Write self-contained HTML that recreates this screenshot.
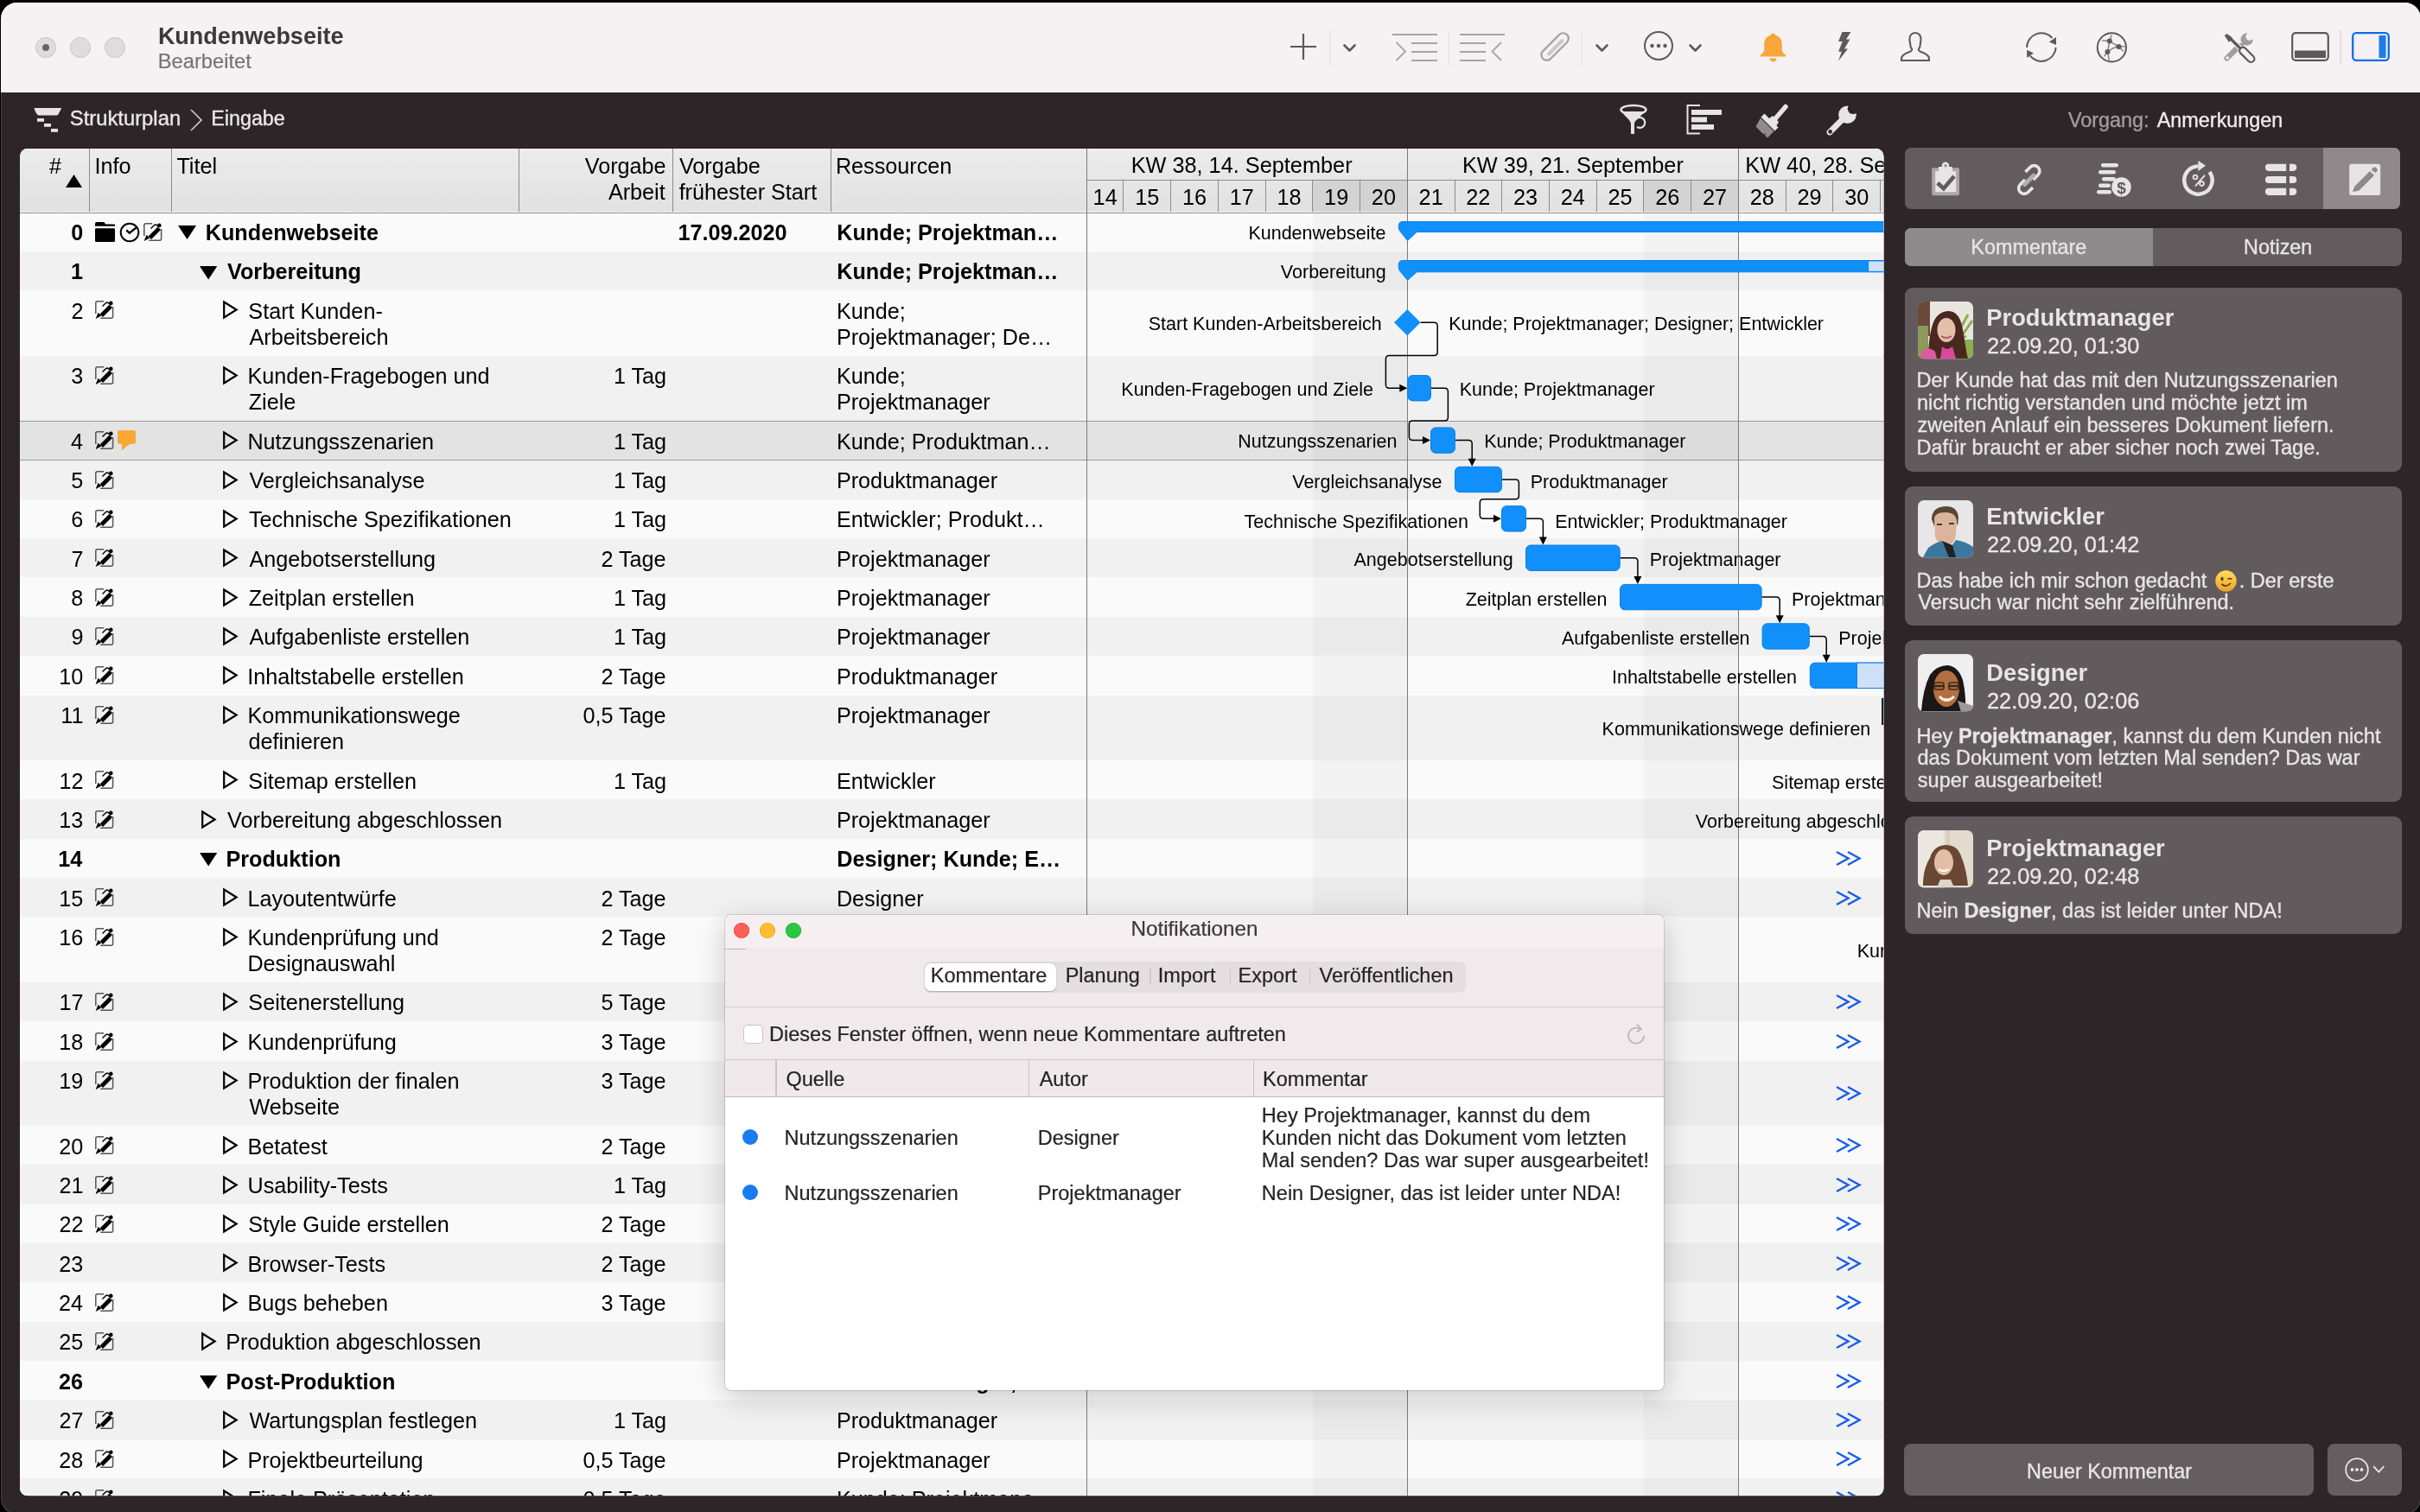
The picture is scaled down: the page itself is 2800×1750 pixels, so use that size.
<!DOCTYPE html>
<html><head><meta charset="utf-8"><title>Kundenwebseite</title>
<style>
html,body{margin:0;padding:0;width:2800px;height:1750px;overflow:hidden;background:#000;}
body{position:relative;font-family:"Liberation Sans", sans-serif;}
.a{position:absolute;}
.t{position:absolute;white-space:nowrap;line-height:1;}
.sf{-webkit-text-stroke:0.35px currentColor;}
.sd{-webkit-text-stroke:0.2px currentColor;}
svg{position:absolute;overflow:visible;}
</style></head><body>
<div id="root" style="position:absolute;left:0;top:0;width:2800px;height:1750px;will-change:transform;"><div class="a" style="left:1px;top:3px;width:2800px;height:1750px;background:#2e2528;border-radius:19px;overflow:hidden;box-shadow:inset 0 0 0 1px #4a4346;"></div><div class="a" style="left:1px;top:3px;width:2800px;height:104px;background:#f6f1f3;border-radius:19px 19px 0 0;box-shadow:inset 0 1px 0 #fff;"></div><div class="a" style="left:41.25px;top:43.25px;width:21.5px;height:21.5px;border-radius:50%;background:#e0dcdd;border:1px solid #c9c5c7;"></div><div class="a" style="left:81.25px;top:43.25px;width:21.5px;height:21.5px;border-radius:50%;background:#e0dcdd;border:1px solid #c9c5c7;"></div><div class="a" style="left:121.25px;top:43.25px;width:21.5px;height:21.5px;border-radius:50%;background:#e0dcdd;border:1px solid #c9c5c7;"></div><div class="a" style="left:49px;top:51px;width:8px;height:8px;border-radius:50%;background:#6a6466;"></div><div class="t " style="left:182.89px;top:29.00px;font-size:27px;color:#3f3739;font-weight:700;">Kundenwebseite</div><div class="t sd" style="left:182.76px;top:60.00px;font-size:23.7px;color:#7b7376;">Bearbeitet</div><svg style="left:1493px;top:39px" width="30" height="30" viewBox="0 0 30 30"><path d="M15 0V30M0 15H30" stroke="#5f585b" stroke-width="2.2"/></svg><div class="a" style="left:1537.50px;top:35.00px;width:1.50px;height:40.00px;background:#e3dde0;"></div><svg style="left:1553.5px;top:51.2px" width="15" height="9" viewBox="0 0 15 9"><path d="M1.5 1.5L7.5 7.5L13.5 1.5" fill="none" stroke="#5f585b" stroke-width="2.6" stroke-linecap="round" stroke-linejoin="round"/></svg><svg style="left:1611px;top:39px" width="53" height="32" viewBox="0 0 53 32"><g stroke="#aaa3a6" stroke-width="1.8" fill="none"><path d="M0 1H52M22 11H52M22 21H52M22 31H52"/><path d="M4.5 10L15 20.5L4.5 31"/></g></svg><div class="a" style="left:1675.50px;top:35.00px;width:1.50px;height:40.00px;background:#e3dde0;"></div><svg style="left:1689px;top:39px" width="53" height="32" viewBox="0 0 53 32"><g stroke="#aaa3a6" stroke-width="1.8" fill="none"><path d="M0 1H52M0 11H30M0 21H30M0 31H30"/><path d="M48 10L37.5 20.5L48 31"/></g></svg><svg style="left:1783px;top:38px" width="34" height="34" viewBox="0 0 34 34"><path d="M9.5 31.5L30 11A6.2 6.2 0 0 0 21.2 2.2L2.2 21.2A6.2 6.2 0 0 0 11 30" fill="none" stroke="#aaa3a6" stroke-width="2.4" stroke-linecap="round"/><path d="M9 24.5L24.5 9" stroke="#cdc8ca" stroke-width="4" stroke-linecap="round"/></svg><div class="a" style="left:1829.50px;top:35.00px;width:1.50px;height:40.00px;background:#e3dde0;"></div><svg style="left:1845.8px;top:51.2px" width="15" height="9" viewBox="0 0 15 9"><path d="M1.5 1.5L7.5 7.5L13.5 1.5" fill="none" stroke="#5f585b" stroke-width="2.6" stroke-linecap="round" stroke-linejoin="round"/></svg><svg style="left:1902px;top:36px" width="34" height="34" viewBox="0 0 34 34"><circle cx="17" cy="17" r="16" fill="none" stroke="#5f585b" stroke-width="2"/><circle cx="9.5" cy="17" r="2.2" fill="#5f585b"/><circle cx="17" cy="17" r="2.2" fill="#5f585b"/><circle cx="24.5" cy="17" r="2.2" fill="#5f585b"/></svg><svg style="left:1953.5px;top:51.2px" width="15" height="9" viewBox="0 0 15 9"><path d="M1.5 1.5L7.5 7.5L13.5 1.5" fill="none" stroke="#5f585b" stroke-width="2.6" stroke-linecap="round" stroke-linejoin="round"/></svg><svg style="left:2035px;top:36px" width="33" height="37" viewBox="0 0 33 37"><path d="M16.5 2.5c1.6 0 2.6 1 2.6 2.2 5.2 1.2 7.7 5.3 7.7 11.3v5.5c0 2.5 2.2 4.6 4.4 6.2v1.8H1.8v-1.8c2.2-1.6 4.4-3.7 4.4-6.2V16c0-6 2.5-10.1 7.7-11.3 0-1.2 1-2.2 2.6-2.2z" fill="#f8a63c"/><path d="M12.5 31.5h8a4 4 0 0 1-8 0z" fill="#f8a63c"/></svg><svg style="left:2126px;top:36px" width="17" height="36" viewBox="0 0 17 36"><path d="M5.4 0.9H15.5L10 9.6H14.4L8 20.6H12L1.1 34.5L4.8 23.8H1.1L5.7 12H1.1Z" fill="#5f585b"/></svg><svg style="left:2199px;top:37px" width="35" height="35" viewBox="0 0 35 35"><path d="M17 1C12.5 1 10.5 4.5 10.5 8.5C10.5 11 11 12.5 11.3 14.5C11 17 12.5 18.5 13.2 20.3C13 22 11 23 8 24C3 26 1 28 1 31V33H33V31C33 28 31 26 26 24C23 23 21 22 20.8 20.3C21.5 18.5 23 17 22.7 14.5C23 12.5 23.5 11 23.5 8.5C23.5 4.5 21.5 1 17 1Z" fill="none" stroke="#5f585b" stroke-width="2.1"/></svg><svg style="left:2343px;top:36px" width="38" height="38" viewBox="0 0 38 38"><g fill="none" stroke="#5f585b" stroke-width="2"><path d="M2.1 18.9A16.8 16.8 0 0 1 31.5 8"/><path d="M35.7 18.9A16.8 16.8 0 0 1 5.9 28.7"/></g><path d="M27.9 12.5L36 7V16Z" fill="#5f585b"/><path d="M2.1 21.8L9.9 25.5L2.1 31Z" fill="#5f585b"/></svg><svg style="left:2426px;top:37px" width="36" height="36" viewBox="0 0 36 36"><g stroke="#8e8789" stroke-width="1.6" fill="none"><path d="M14.8 10.6L17.2 3.4M14.8 10.6L6.2 9.8M14.8 10.6L25.5 17M14.8 10.6L12.5 23.1M25.5 17L32.8 16.7M25.5 17L31 22.5M12.5 23.1Q18 18 25.5 17M12.5 23.1L8.5 28.3M12.5 23.1L14.3 32.9"/></g><circle cx="17.4" cy="17.9" r="16.6" fill="none" stroke="#5f585b" stroke-width="2"/><circle cx="14.8" cy="10.6" r="3" fill="#5f585b"/><circle cx="25.5" cy="17" r="3" fill="#5f585b"/><circle cx="12.5" cy="23.1" r="3" fill="#5f585b"/></svg><svg style="left:2570px;top:36px" width="40" height="38" viewBox="0 0 40 38"><path d="M6.5 31.5L19 19" stroke="#a39c9f" stroke-width="6.2" stroke-linecap="round"/><circle cx="7.2" cy="31" r="1.8" fill="#f6f1f3"/><circle cx="29.7" cy="9.5" r="7.2" fill="#a39c9f"/><path d="M19.5 14L25 19.5L27 14Z" fill="#a39c9f"/><circle cx="33" cy="6.2" r="4.6" fill="#f6f1f3"/><path d="M33 2L38 2L38 10Z" fill="#f6f1f3"/><path d="M9 7L23.5 21.5" stroke="#f6f1f3" stroke-width="6"/><path d="M9 7L23.5 21.5" stroke="#5f585b" stroke-width="3.2"/><path d="M3.8 5.2L6.4 3L12.8 7.6L12.8 8.8L9.5 12.5L8.5 12.3Z" fill="#5f585b"/><rect x="-10.5" y="-4" width="21" height="8" rx="4" transform="translate(29.8 27.4) rotate(45)" fill="#f6f1f3" stroke="#5f585b" stroke-width="2.2"/></svg><svg style="left:2651px;top:37px" width="44" height="34" viewBox="0 0 44 34"><rect x="1.2" y="1.2" width="41.6" height="31.6" rx="4" fill="none" stroke="#5f585b" stroke-width="2.2"/><rect x="4" y="21.5" width="36" height="8.5" fill="#5f585b"/></svg><div class="a" style="left:2707.00px;top:35.00px;width:1.50px;height:40.00px;background:#e3dde0;"></div><svg style="left:2721px;top:37px" width="44" height="34" viewBox="0 0 44 34"><rect x="1.2" y="1.2" width="41.6" height="31.6" rx="4" fill="none" stroke="#0a6ee8" stroke-width="2.3"/><rect x="31.5" y="4" width="8" height="26" fill="#1f7ae8"/></svg><svg style="left:39px;top:125px" width="33" height="28" viewBox="0 0 33 28"><path d="M1 0.5H31.5L29.5 4.5L27.5 8H5L2.5 4.5Z" fill="#e7e5e6" stroke="#e7e5e6" stroke-width="1" stroke-linejoin="round"/><rect x="4" y="12" width="8" height="3.8" fill="#e7e5e6"/><rect x="12" y="18" width="8" height="3.8" fill="#e7e5e6"/><rect x="20" y="24" width="8" height="3.8" fill="#e7e5e6"/></svg><div class="t sf" style="left:80.82px;top:125.00px;font-size:23.8px;color:#ebe8e9;">Strukturplan</div><svg style="left:220px;top:126px" width="14" height="26" viewBox="0 0 14 26"><path d="M1 1L13 13L1 25" fill="none" stroke="#cfcbcd" stroke-width="1.6"/></svg><div class="t sf" style="left:244.29px;top:126.00px;font-size:23.3px;color:#ebe8e9;">Eingabe</div><svg style="left:1874px;top:121px" width="34" height="36" viewBox="0 0 34 36"><ellipse cx="16" cy="6" rx="14.5" ry="5" fill="none" stroke="#e6e4e5" stroke-width="2.4"/><path d="M2 8C6 14 12 17 13 22V34H17V22C18 17 24 14 30 8" fill="#e6e4e5"/><path d="M18 18A6 6 0 1 1 20 26" fill="none" stroke="#e6e4e5" stroke-width="2.2"/></svg><svg style="left:1951px;top:121px" width="41" height="35" viewBox="0 0 41 35"><path d="M16 1H1.5V33.5H16" fill="none" stroke="#e6e4e5" stroke-width="2"/><rect x="6" y="6" width="35" height="6" fill="#e6e4e5"/><rect x="6" y="14.5" width="18" height="6" fill="#e6e4e5"/><rect x="6" y="23" width="26" height="6" fill="#e6e4e5"/></svg><svg style="left:2031px;top:121px" width="39" height="38" viewBox="0 0 39 38"><path d="M35 2.5L22.5 17" stroke="#e6e4e5" stroke-width="5.5" stroke-linecap="round"/><path d="M20 13L27 20L24 25.5L18.5 23L13.5 18Z" fill="#e6e4e5"/><path d="M10.5 10.5L26.5 26.5L22.5 30.5L6.5 14.5Z" fill="#e6e4e5"/><path d="M6 15.5L21.5 31L14 38.5L11 35.5L12.5 33L9.5 34.5L0.5 25.5Z" fill="#8f8b8d"/></svg><svg style="left:2113px;top:120px" width="38" height="38" viewBox="0 0 38 38"><path d="M4 33L21 16" stroke="#e6e4e5" stroke-width="6.8" stroke-linecap="round"/><circle cx="24.5" cy="12.8" r="10.3" fill="#e6e4e5"/><circle cx="31" cy="5.8" r="6.3" fill="#2e2528"/><circle cx="4.6" cy="32.4" r="2.3" fill="#2e2528"/></svg><div class="a" style="left:0;top:0;width:2800px;height:1750px;clip-path:inset(171.8px 620.5px 18.700000000000045px 23px round 9px);"><div class="a" style="left:23.00px;top:171.80px;width:2156.50px;height:1559.50px;background:#fafafa;"></div><div class="a" style="left:23.00px;top:245.35px;width:2156.50px;height:45.37px;background:#fafafa;"></div><div class="a" style="left:23.00px;top:290.72px;width:2156.50px;height:45.37px;background:#f1f1f1;"></div><div class="a" style="left:23.00px;top:336.09px;width:2156.50px;height:75.42px;background:#fafafa;"></div><div class="a" style="left:23.00px;top:411.51px;width:2156.50px;height:75.42px;background:#f1f1f1;"></div><div class="a" style="left:23.00px;top:486.93px;width:2156.50px;height:45.37px;background:#e3e3e3;"></div><div class="a" style="left:23.00px;top:532.30px;width:2156.50px;height:45.37px;background:#f1f1f1;"></div><div class="a" style="left:23.00px;top:577.67px;width:2156.50px;height:45.37px;background:#fafafa;"></div><div class="a" style="left:23.00px;top:623.04px;width:2156.50px;height:45.37px;background:#f1f1f1;"></div><div class="a" style="left:23.00px;top:668.41px;width:2156.50px;height:45.37px;background:#fafafa;"></div><div class="a" style="left:23.00px;top:713.78px;width:2156.50px;height:45.37px;background:#f1f1f1;"></div><div class="a" style="left:23.00px;top:759.15px;width:2156.50px;height:45.37px;background:#fafafa;"></div><div class="a" style="left:23.00px;top:804.52px;width:2156.50px;height:75.42px;background:#f1f1f1;"></div><div class="a" style="left:23.00px;top:879.94px;width:2156.50px;height:45.37px;background:#fafafa;"></div><div class="a" style="left:23.00px;top:925.31px;width:2156.50px;height:45.37px;background:#f1f1f1;"></div><div class="a" style="left:23.00px;top:970.68px;width:2156.50px;height:45.37px;background:#fafafa;"></div><div class="a" style="left:23.00px;top:1016.05px;width:2156.50px;height:45.37px;background:#f1f1f1;"></div><div class="a" style="left:23.00px;top:1061.42px;width:2156.50px;height:75.42px;background:#fafafa;"></div><div class="a" style="left:23.00px;top:1136.84px;width:2156.50px;height:45.37px;background:#f1f1f1;"></div><div class="a" style="left:23.00px;top:1182.21px;width:2156.50px;height:45.37px;background:#fafafa;"></div><div class="a" style="left:23.00px;top:1227.58px;width:2156.50px;height:75.42px;background:#f1f1f1;"></div><div class="a" style="left:23.00px;top:1303.00px;width:2156.50px;height:45.37px;background:#fafafa;"></div><div class="a" style="left:23.00px;top:1348.37px;width:2156.50px;height:45.37px;background:#f1f1f1;"></div><div class="a" style="left:23.00px;top:1393.74px;width:2156.50px;height:45.37px;background:#fafafa;"></div><div class="a" style="left:23.00px;top:1439.11px;width:2156.50px;height:45.37px;background:#f1f1f1;"></div><div class="a" style="left:23.00px;top:1484.48px;width:2156.50px;height:45.37px;background:#fafafa;"></div><div class="a" style="left:23.00px;top:1529.85px;width:2156.50px;height:45.37px;background:#f1f1f1;"></div><div class="a" style="left:23.00px;top:1575.22px;width:2156.50px;height:45.37px;background:#fafafa;"></div><div class="a" style="left:23.00px;top:1620.59px;width:2156.50px;height:45.37px;background:#f1f1f1;"></div><div class="a" style="left:23.00px;top:1665.96px;width:2156.50px;height:45.37px;background:#fafafa;"></div><div class="a" style="left:23.00px;top:1711.33px;width:2156.50px;height:45.37px;background:#f1f1f1;"></div><div class="a" style="left:23.00px;top:486.93px;width:2156.50px;height:1.20px;background:#9c9c9c;"></div><div class="a" style="left:23.00px;top:531.70px;width:2156.50px;height:1.20px;background:#9c9c9c;"></div><div class="a" style="left:1518.84px;top:171.80px;width:109.46px;height:1559.50px;background:rgba(0,0,0,0.028);"></div><div class="a" style="left:1901.95px;top:171.80px;width:109.46px;height:1559.50px;background:rgba(0,0,0,0.028);"></div><div class="a" style="left:23.00px;top:171.80px;width:2156.50px;height:73.55px;background:linear-gradient(#ececec,#e1e1e1);"></div><div class="a" style="left:103.00px;top:171.80px;width:1.00px;height:73.55px;background:#8c8c8c;"></div><div class="a" style="left:198.00px;top:171.80px;width:1.00px;height:73.55px;background:#8c8c8c;"></div><div class="a" style="left:600.00px;top:171.80px;width:1.00px;height:73.55px;background:#8c8c8c;"></div><div class="a" style="left:778.00px;top:171.80px;width:1.00px;height:73.55px;background:#8c8c8c;"></div><div class="a" style="left:961.00px;top:171.80px;width:1.00px;height:73.55px;background:#8c8c8c;"></div><div class="a" style="left:23.00px;top:245.95px;width:2156.50px;height:1.40px;background:#8f8f8f;"></div><div class="a" style="left:1257.40px;top:208.00px;width:922.10px;height:1.00px;background:#8c8c8c;"></div><div class="a" style="left:1518.84px;top:209.00px;width:54.73px;height:36.35px;background:#d3d3d3;"></div><div class="a" style="left:1573.57px;top:209.00px;width:54.73px;height:36.35px;background:#d3d3d3;"></div><div class="a" style="left:1901.95px;top:209.00px;width:54.73px;height:36.35px;background:#d3d3d3;"></div><div class="a" style="left:1956.68px;top:209.00px;width:54.73px;height:36.35px;background:#d3d3d3;"></div><div class="a" style="left:1299.00px;top:209.00px;width:1.00px;height:36.35px;background:#8c8c8c;"></div><div class="a" style="left:1354.00px;top:209.00px;width:1.00px;height:36.35px;background:#8c8c8c;"></div><div class="a" style="left:1409.00px;top:209.00px;width:1.00px;height:36.35px;background:#8c8c8c;"></div><div class="a" style="left:1464.00px;top:209.00px;width:1.00px;height:36.35px;background:#8c8c8c;"></div><div class="a" style="left:1518.00px;top:209.00px;width:1.00px;height:36.35px;background:#8c8c8c;"></div><div class="a" style="left:1573.00px;top:209.00px;width:1.00px;height:36.35px;background:#8c8c8c;"></div><div class="a" style="left:1683.00px;top:209.00px;width:1.00px;height:36.35px;background:#8c8c8c;"></div><div class="a" style="left:1737.00px;top:209.00px;width:1.00px;height:36.35px;background:#8c8c8c;"></div><div class="a" style="left:1792.00px;top:209.00px;width:1.00px;height:36.35px;background:#8c8c8c;"></div><div class="a" style="left:1847.00px;top:209.00px;width:1.00px;height:36.35px;background:#8c8c8c;"></div><div class="a" style="left:1901.00px;top:209.00px;width:1.00px;height:36.35px;background:#8c8c8c;"></div><div class="a" style="left:1956.00px;top:209.00px;width:1.00px;height:36.35px;background:#8c8c8c;"></div><div class="a" style="left:2066.00px;top:209.00px;width:1.00px;height:36.35px;background:#8c8c8c;"></div><div class="a" style="left:2120.00px;top:209.00px;width:1.00px;height:36.35px;background:#8c8c8c;"></div><div class="a" style="left:2175.00px;top:209.00px;width:1.00px;height:36.35px;background:#8c8c8c;"></div><div class="a" style="left:1628.00px;top:171.80px;width:1.00px;height:1559.50px;background:#7c7c7c;"></div><div class="a" style="left:2011.00px;top:171.80px;width:1.00px;height:1559.50px;background:#7c7c7c;"></div><div class="a" style="left:1257.00px;top:171.80px;width:1.00px;height:1559.50px;background:#7c7c7c;"></div><div class="t " style="left:56.89px;top:180.00px;font-size:25.2px;color:#000;">#</div><svg style="left:76px;top:202px" width="19" height="15" viewBox="0 0 19 15"><path d="M9.5 0L19 15H0Z" fill="#000"/></svg><div class="t " style="left:109.57px;top:180.00px;font-size:25.2px;color:#000;">Info</div><div class="t " style="left:204.43px;top:180.00px;font-size:25.2px;color:#000;">Titel</div><div class="t " style="left:-2229.38px;width:3000px;text-align:right;top:180.00px;font-size:25.2px;color:#000;">Vorgabe</div><div class="t " style="left:-2230.32px;width:3000px;text-align:right;top:210.00px;font-size:25.2px;color:#000;">Arbeit</div><div class="t " style="left:785.89px;top:180.00px;font-size:25.2px;color:#000;">Vorgabe</div><div class="t " style="left:785.64px;top:210.00px;font-size:25.2px;color:#000;">frühester Start</div><div class="t " style="left:966.93px;top:180.00px;font-size:25.2px;color:#000;">Ressourcen</div><div class="t " style="left:-63.40px;width:3000px;text-align:center;top:179.00px;font-size:25.3px;color:#000;">KW 38, 14. September</div><div class="t " style="left:319.90px;width:3000px;text-align:center;top:179.00px;font-size:25.3px;color:#000;">KW 39, 21. September</div><div class="t " style="left:2019.32px;top:179.00px;font-size:25.3px;color:#000;">KW 40, 28. September</div><div class="t " style="left:-221.34px;width:3000px;text-align:center;top:216.00px;font-size:25.3px;color:#000;">14</div><div class="t " style="left:-172.71px;width:3000px;text-align:center;top:216.00px;font-size:25.3px;color:#000;">15</div><div class="t " style="left:-117.98px;width:3000px;text-align:center;top:216.00px;font-size:25.3px;color:#000;">16</div><div class="t " style="left:-63.26px;width:3000px;text-align:center;top:216.00px;font-size:25.3px;color:#000;">17</div><div class="t " style="left:-8.53px;width:3000px;text-align:center;top:216.00px;font-size:25.3px;color:#000;">18</div><div class="t " style="left:46.20px;width:3000px;text-align:center;top:216.00px;font-size:25.3px;color:#000;">19</div><div class="t " style="left:100.93px;width:3000px;text-align:center;top:216.00px;font-size:25.3px;color:#000;">20</div><div class="t " style="left:155.66px;width:3000px;text-align:center;top:216.00px;font-size:25.3px;color:#000;">21</div><div class="t " style="left:210.39px;width:3000px;text-align:center;top:216.00px;font-size:25.3px;color:#000;">22</div><div class="t " style="left:265.12px;width:3000px;text-align:center;top:216.00px;font-size:25.3px;color:#000;">23</div><div class="t " style="left:319.86px;width:3000px;text-align:center;top:216.00px;font-size:25.3px;color:#000;">24</div><div class="t " style="left:374.59px;width:3000px;text-align:center;top:216.00px;font-size:25.3px;color:#000;">25</div><div class="t " style="left:429.31px;width:3000px;text-align:center;top:216.00px;font-size:25.3px;color:#000;">26</div><div class="t " style="left:484.04px;width:3000px;text-align:center;top:216.00px;font-size:25.3px;color:#000;">27</div><div class="t " style="left:538.77px;width:3000px;text-align:center;top:216.00px;font-size:25.3px;color:#000;">28</div><div class="t " style="left:593.50px;width:3000px;text-align:center;top:216.00px;font-size:25.3px;color:#000;">29</div><div class="t " style="left:648.23px;width:3000px;text-align:center;top:216.00px;font-size:25.3px;color:#000;">30</div><div class="t " style="left:-2903.77px;width:3000px;text-align:right;top:257.00px;font-size:25.2px;color:#000;font-weight:700;">0</div><svg style="left:110.4px;top:257.25px" width="23" height="23" viewBox="0 0 23 23"><path d="M0 4.8V2Q0 0 2 0H9.5Q11.3 0 12 2.4H21.8Q23 2.4 23 3.6V4.8Z" fill="#000"/><rect x="0" y="7.3" width="23" height="15.6" rx="1.2" fill="#000"/></svg><svg style="left:137.7px;top:256.85px" width="24" height="24" viewBox="0 0 24 24"><circle cx="12" cy="12" r="10.3" fill="none" stroke="#000" stroke-width="2"/><path d="M8.2 9.4L11.8 12.6L19.4 6.6" fill="none" stroke="#000" stroke-width="2.4"/></svg><svg style="left:166.2px;top:257.65px" width="22" height="22" viewBox="0 0 22 22"><path d="M10.2 0.8H2.8Q0.8 0.8 0.8 2.8V15" fill="none" stroke="#555" stroke-width="1.5"/><path d="M6.2 20.2H18.6Q20.6 20.2 20.6 18.2V7" fill="none" stroke="#555" stroke-width="1.5"/><path d="M5.6 15.6L16.6 4.6L20 8L9 19Z" fill="#000"/><path d="M0.6 21L3.6 13.8L7.2 17.6Z" fill="#000"/><path d="M8.5 6.6L12.6 2.6Q14 1.4 15.2 2.6L16.4 3.6" fill="none" stroke="#000" stroke-width="1.4"/><circle cx="18.3" cy="2.9" r="2.3" fill="#000"/></svg><svg style="left:205.8px;top:260.95px" width="21" height="16" viewBox="0 0 21 16"><path d="M0 0H21L10.5 16Z" fill="#000"/></svg><div class="t " style="left:237.81px;top:257.00px;font-size:25.2px;color:#000;font-weight:700;">Kundenwebseite</div><div class="t " style="left:784.41px;top:257.00px;font-size:25.2px;color:#000;font-weight:700;">17.09.2020</div><div class="t " style="left:968.31px;top:257.00px;font-size:25.2px;color:#000;font-weight:700;">Kunde; Projektman…</div><div class="t " style="left:-2904.10px;width:3000px;text-align:right;top:302.00px;font-size:25.2px;color:#000;font-weight:700;">1</div><svg style="left:231.4px;top:307.52px" width="20.3" height="15.4" viewBox="0 0 20.3 15.4"><path d="M0 0H20.3L10.15 15.4Z" fill="#000"/></svg><div class="t " style="left:263.03px;top:302.00px;font-size:25.2px;color:#000;font-weight:700;">Vorbereitung</div><div class="t " style="left:968.31px;top:302.00px;font-size:25.2px;color:#000;font-weight:700;">Kunde; Projektman…</div><div class="t " style="left:-2903.53px;width:3000px;text-align:right;top:348.00px;font-size:25.2px;color:#000;">2</div><svg style="left:110.2px;top:348.39px" width="22" height="22" viewBox="0 0 22 22"><path d="M10.2 0.8H2.8Q0.8 0.8 0.8 2.8V15" fill="none" stroke="#555" stroke-width="1.5"/><path d="M6.2 20.2H18.6Q20.6 20.2 20.6 18.2V7" fill="none" stroke="#555" stroke-width="1.5"/><path d="M5.6 15.6L16.6 4.6L20 8L9 19Z" fill="#000"/><path d="M0.6 21L3.6 13.8L7.2 17.6Z" fill="#000"/><path d="M8.5 6.6L12.6 2.6Q14 1.4 15.2 2.6L16.4 3.6" fill="none" stroke="#000" stroke-width="1.4"/><circle cx="18.3" cy="2.9" r="2.3" fill="#000"/></svg><svg style="left:257.5px;top:348.39px" width="17" height="21" viewBox="0 0 17 21"><path d="M1.2 1.5L15.6 10.5L1.2 19.5Z" fill="none" stroke="#000" stroke-width="2.2" stroke-linejoin="miter"/></svg><div class="t " style="left:287.36px;top:348.00px;font-size:25.2px;color:#000;">Start Kunden-</div><div class="t " style="left:288.45px;top:378.00px;font-size:25.2px;color:#000;">Arbeitsbereich</div><div class="t " style="left:967.93px;top:348.00px;font-size:25.2px;color:#000;">Kunde;</div><div class="t " style="left:967.93px;top:378.00px;font-size:25.2px;color:#000;">Projektmanager; De…</div><div class="t " style="left:-2903.69px;width:3000px;text-align:right;top:423.00px;font-size:25.2px;color:#000;">3</div><svg style="left:110.2px;top:423.81px" width="22" height="22" viewBox="0 0 22 22"><path d="M10.2 0.8H2.8Q0.8 0.8 0.8 2.8V15" fill="none" stroke="#555" stroke-width="1.5"/><path d="M6.2 20.2H18.6Q20.6 20.2 20.6 18.2V7" fill="none" stroke="#555" stroke-width="1.5"/><path d="M5.6 15.6L16.6 4.6L20 8L9 19Z" fill="#000"/><path d="M0.6 21L3.6 13.8L7.2 17.6Z" fill="#000"/><path d="M8.5 6.6L12.6 2.6Q14 1.4 15.2 2.6L16.4 3.6" fill="none" stroke="#000" stroke-width="1.4"/><circle cx="18.3" cy="2.9" r="2.3" fill="#000"/></svg><svg style="left:257.5px;top:423.81px" width="17" height="21" viewBox="0 0 17 21"><path d="M1.2 1.5L15.6 10.5L1.2 19.5Z" fill="none" stroke="#000" stroke-width="2.2" stroke-linejoin="miter"/></svg><div class="t " style="left:286.43px;top:423.00px;font-size:25.2px;color:#000;">Kunden-Fragebogen und</div><div class="t " style="left:287.70px;top:453.00px;font-size:25.2px;color:#000;">Ziele</div><div class="t " style="left:-2228.88px;width:3000px;text-align:right;top:423.00px;font-size:25.2px;color:#000;">1 Tag</div><div class="t " style="left:967.93px;top:423.00px;font-size:25.2px;color:#000;">Kunde;</div><div class="t " style="left:967.93px;top:453.00px;font-size:25.2px;color:#000;">Projektmanager</div><div class="t " style="left:-2904.06px;width:3000px;text-align:right;top:499.00px;font-size:25.2px;color:#000;">4</div><svg style="left:110.2px;top:499.23px" width="22" height="22" viewBox="0 0 22 22"><path d="M10.2 0.8H2.8Q0.8 0.8 0.8 2.8V15" fill="none" stroke="#555" stroke-width="1.5"/><path d="M6.2 20.2H18.6Q20.6 20.2 20.6 18.2V7" fill="none" stroke="#555" stroke-width="1.5"/><path d="M5.6 15.6L16.6 4.6L20 8L9 19Z" fill="#000"/><path d="M0.6 21L3.6 13.8L7.2 17.6Z" fill="#000"/><path d="M8.5 6.6L12.6 2.6Q14 1.4 15.2 2.6L16.4 3.6" fill="none" stroke="#000" stroke-width="1.4"/><circle cx="18.3" cy="2.9" r="2.3" fill="#000"/></svg><svg style="left:136.3px;top:497.93px" width="22" height="24" viewBox="0 0 22 24"><path d="M2.5 0H18.5Q21 0 21 2.5V13.2Q21 15.7 18.5 15.7H14.2L4.9 23.2V15.7H2.5Q0 15.7 0 13.2V2.5Q0 0 2.5 0Z" fill="#f8a735"/></svg><svg style="left:257.5px;top:499.23px" width="17" height="21" viewBox="0 0 17 21"><path d="M1.2 1.5L15.6 10.5L1.2 19.5Z" fill="none" stroke="#000" stroke-width="2.2" stroke-linejoin="miter"/></svg><div class="t " style="left:286.43px;top:499.00px;font-size:25.2px;color:#000;">Nutzungsszenarien</div><div class="t " style="left:-2228.88px;width:3000px;text-align:right;top:499.00px;font-size:25.2px;color:#000;">1 Tag</div><div class="t " style="left:967.93px;top:499.00px;font-size:25.2px;color:#000;">Kunde; Produktman…</div><div class="t " style="left:-2903.74px;width:3000px;text-align:right;top:544.00px;font-size:25.2px;color:#000;">5</div><svg style="left:110.2px;top:544.5999999999999px" width="22" height="22" viewBox="0 0 22 22"><path d="M10.2 0.8H2.8Q0.8 0.8 0.8 2.8V15" fill="none" stroke="#555" stroke-width="1.5"/><path d="M6.2 20.2H18.6Q20.6 20.2 20.6 18.2V7" fill="none" stroke="#555" stroke-width="1.5"/><path d="M5.6 15.6L16.6 4.6L20 8L9 19Z" fill="#000"/><path d="M0.6 21L3.6 13.8L7.2 17.6Z" fill="#000"/><path d="M8.5 6.6L12.6 2.6Q14 1.4 15.2 2.6L16.4 3.6" fill="none" stroke="#000" stroke-width="1.4"/><circle cx="18.3" cy="2.9" r="2.3" fill="#000"/></svg><svg style="left:257.5px;top:544.5999999999999px" width="17" height="21" viewBox="0 0 17 21"><path d="M1.2 1.5L15.6 10.5L1.2 19.5Z" fill="none" stroke="#000" stroke-width="2.2" stroke-linejoin="miter"/></svg><div class="t " style="left:288.39px;top:544.00px;font-size:25.2px;color:#000;">Vergleichsanalyse</div><div class="t " style="left:-2228.88px;width:3000px;text-align:right;top:544.00px;font-size:25.2px;color:#000;">1 Tag</div><div class="t " style="left:967.93px;top:544.00px;font-size:25.2px;color:#000;">Produktmanager</div><div class="t " style="left:-2903.69px;width:3000px;text-align:right;top:589.00px;font-size:25.2px;color:#000;">6</div><svg style="left:110.2px;top:589.9699999999999px" width="22" height="22" viewBox="0 0 22 22"><path d="M10.2 0.8H2.8Q0.8 0.8 0.8 2.8V15" fill="none" stroke="#555" stroke-width="1.5"/><path d="M6.2 20.2H18.6Q20.6 20.2 20.6 18.2V7" fill="none" stroke="#555" stroke-width="1.5"/><path d="M5.6 15.6L16.6 4.6L20 8L9 19Z" fill="#000"/><path d="M0.6 21L3.6 13.8L7.2 17.6Z" fill="#000"/><path d="M8.5 6.6L12.6 2.6Q14 1.4 15.2 2.6L16.4 3.6" fill="none" stroke="#000" stroke-width="1.4"/><circle cx="18.3" cy="2.9" r="2.3" fill="#000"/></svg><svg style="left:257.5px;top:589.9699999999999px" width="17" height="21" viewBox="0 0 17 21"><path d="M1.2 1.5L15.6 10.5L1.2 19.5Z" fill="none" stroke="#000" stroke-width="2.2" stroke-linejoin="miter"/></svg><div class="t " style="left:287.93px;top:589.00px;font-size:25.2px;color:#000;">Technische Spezifikationen</div><div class="t " style="left:-2228.88px;width:3000px;text-align:right;top:589.00px;font-size:25.2px;color:#000;">1 Tag</div><div class="t " style="left:967.93px;top:589.00px;font-size:25.2px;color:#000;">Entwickler; Produkt…</div><div class="t " style="left:-2903.53px;width:3000px;text-align:right;top:635.00px;font-size:25.2px;color:#000;">7</div><svg style="left:110.2px;top:635.3399999999999px" width="22" height="22" viewBox="0 0 22 22"><path d="M10.2 0.8H2.8Q0.8 0.8 0.8 2.8V15" fill="none" stroke="#555" stroke-width="1.5"/><path d="M6.2 20.2H18.6Q20.6 20.2 20.6 18.2V7" fill="none" stroke="#555" stroke-width="1.5"/><path d="M5.6 15.6L16.6 4.6L20 8L9 19Z" fill="#000"/><path d="M0.6 21L3.6 13.8L7.2 17.6Z" fill="#000"/><path d="M8.5 6.6L12.6 2.6Q14 1.4 15.2 2.6L16.4 3.6" fill="none" stroke="#000" stroke-width="1.4"/><circle cx="18.3" cy="2.9" r="2.3" fill="#000"/></svg><svg style="left:257.5px;top:635.3399999999999px" width="17" height="21" viewBox="0 0 17 21"><path d="M1.2 1.5L15.6 10.5L1.2 19.5Z" fill="none" stroke="#000" stroke-width="2.2" stroke-linejoin="miter"/></svg><div class="t " style="left:288.45px;top:635.00px;font-size:25.2px;color:#000;">Angebotserstellung</div><div class="t " style="left:-2229.38px;width:3000px;text-align:right;top:635.00px;font-size:25.2px;color:#000;">2 Tage</div><div class="t " style="left:967.93px;top:635.00px;font-size:25.2px;color:#000;">Projektmanager</div><div class="t " style="left:-2903.70px;width:3000px;text-align:right;top:680.00px;font-size:25.2px;color:#000;">8</div><svg style="left:110.2px;top:680.7099999999999px" width="22" height="22" viewBox="0 0 22 22"><path d="M10.2 0.8H2.8Q0.8 0.8 0.8 2.8V15" fill="none" stroke="#555" stroke-width="1.5"/><path d="M6.2 20.2H18.6Q20.6 20.2 20.6 18.2V7" fill="none" stroke="#555" stroke-width="1.5"/><path d="M5.6 15.6L16.6 4.6L20 8L9 19Z" fill="#000"/><path d="M0.6 21L3.6 13.8L7.2 17.6Z" fill="#000"/><path d="M8.5 6.6L12.6 2.6Q14 1.4 15.2 2.6L16.4 3.6" fill="none" stroke="#000" stroke-width="1.4"/><circle cx="18.3" cy="2.9" r="2.3" fill="#000"/></svg><svg style="left:257.5px;top:680.7099999999999px" width="17" height="21" viewBox="0 0 17 21"><path d="M1.2 1.5L15.6 10.5L1.2 19.5Z" fill="none" stroke="#000" stroke-width="2.2" stroke-linejoin="miter"/></svg><div class="t " style="left:287.70px;top:680.00px;font-size:25.2px;color:#000;">Zeitplan erstellen</div><div class="t " style="left:-2228.88px;width:3000px;text-align:right;top:680.00px;font-size:25.2px;color:#000;">1 Tag</div><div class="t " style="left:967.93px;top:680.00px;font-size:25.2px;color:#000;">Projektmanager</div><div class="t " style="left:-2903.61px;width:3000px;text-align:right;top:725.00px;font-size:25.2px;color:#000;">9</div><svg style="left:110.2px;top:726.0799999999999px" width="22" height="22" viewBox="0 0 22 22"><path d="M10.2 0.8H2.8Q0.8 0.8 0.8 2.8V15" fill="none" stroke="#555" stroke-width="1.5"/><path d="M6.2 20.2H18.6Q20.6 20.2 20.6 18.2V7" fill="none" stroke="#555" stroke-width="1.5"/><path d="M5.6 15.6L16.6 4.6L20 8L9 19Z" fill="#000"/><path d="M0.6 21L3.6 13.8L7.2 17.6Z" fill="#000"/><path d="M8.5 6.6L12.6 2.6Q14 1.4 15.2 2.6L16.4 3.6" fill="none" stroke="#000" stroke-width="1.4"/><circle cx="18.3" cy="2.9" r="2.3" fill="#000"/></svg><svg style="left:257.5px;top:726.0799999999999px" width="17" height="21" viewBox="0 0 17 21"><path d="M1.2 1.5L15.6 10.5L1.2 19.5Z" fill="none" stroke="#000" stroke-width="2.2" stroke-linejoin="miter"/></svg><div class="t " style="left:288.45px;top:725.00px;font-size:25.2px;color:#000;">Aufgabenliste erstellen</div><div class="t " style="left:-2228.88px;width:3000px;text-align:right;top:725.00px;font-size:25.2px;color:#000;">1 Tag</div><div class="t " style="left:967.93px;top:725.00px;font-size:25.2px;color:#000;">Projektmanager</div><div class="t " style="left:-2903.82px;width:3000px;text-align:right;top:771.00px;font-size:25.2px;color:#000;">10</div><svg style="left:110.2px;top:771.4499999999999px" width="22" height="22" viewBox="0 0 22 22"><path d="M10.2 0.8H2.8Q0.8 0.8 0.8 2.8V15" fill="none" stroke="#555" stroke-width="1.5"/><path d="M6.2 20.2H18.6Q20.6 20.2 20.6 18.2V7" fill="none" stroke="#555" stroke-width="1.5"/><path d="M5.6 15.6L16.6 4.6L20 8L9 19Z" fill="#000"/><path d="M0.6 21L3.6 13.8L7.2 17.6Z" fill="#000"/><path d="M8.5 6.6L12.6 2.6Q14 1.4 15.2 2.6L16.4 3.6" fill="none" stroke="#000" stroke-width="1.4"/><circle cx="18.3" cy="2.9" r="2.3" fill="#000"/></svg><svg style="left:257.5px;top:771.4499999999999px" width="17" height="21" viewBox="0 0 17 21"><path d="M1.2 1.5L15.6 10.5L1.2 19.5Z" fill="none" stroke="#000" stroke-width="2.2" stroke-linejoin="miter"/></svg><div class="t " style="left:286.17px;top:771.00px;font-size:25.2px;color:#000;">Inhaltstabelle erstellen</div><div class="t " style="left:-2229.38px;width:3000px;text-align:right;top:771.00px;font-size:25.2px;color:#000;">2 Tage</div><div class="t " style="left:967.93px;top:771.00px;font-size:25.2px;color:#000;">Produktmanager</div><div class="t " style="left:-2903.57px;width:3000px;text-align:right;top:816.00px;font-size:25.2px;color:#000;">11</div><svg style="left:110.2px;top:816.8199999999999px" width="22" height="22" viewBox="0 0 22 22"><path d="M10.2 0.8H2.8Q0.8 0.8 0.8 2.8V15" fill="none" stroke="#555" stroke-width="1.5"/><path d="M6.2 20.2H18.6Q20.6 20.2 20.6 18.2V7" fill="none" stroke="#555" stroke-width="1.5"/><path d="M5.6 15.6L16.6 4.6L20 8L9 19Z" fill="#000"/><path d="M0.6 21L3.6 13.8L7.2 17.6Z" fill="#000"/><path d="M8.5 6.6L12.6 2.6Q14 1.4 15.2 2.6L16.4 3.6" fill="none" stroke="#000" stroke-width="1.4"/><circle cx="18.3" cy="2.9" r="2.3" fill="#000"/></svg><svg style="left:257.5px;top:816.8199999999999px" width="17" height="21" viewBox="0 0 17 21"><path d="M1.2 1.5L15.6 10.5L1.2 19.5Z" fill="none" stroke="#000" stroke-width="2.2" stroke-linejoin="miter"/></svg><div class="t " style="left:286.43px;top:816.00px;font-size:25.2px;color:#000;">Kommunikationswege</div><div class="t " style="left:287.44px;top:846.00px;font-size:25.2px;color:#000;">definieren</div><div class="t " style="left:-2229.38px;width:3000px;text-align:right;top:816.00px;font-size:25.2px;color:#000;">0,5 Tage</div><div class="t " style="left:967.93px;top:816.00px;font-size:25.2px;color:#000;">Projektmanager</div><div class="t " style="left:-2903.53px;width:3000px;text-align:right;top:892.00px;font-size:25.2px;color:#000;">12</div><svg style="left:110.2px;top:892.2399999999999px" width="22" height="22" viewBox="0 0 22 22"><path d="M10.2 0.8H2.8Q0.8 0.8 0.8 2.8V15" fill="none" stroke="#555" stroke-width="1.5"/><path d="M6.2 20.2H18.6Q20.6 20.2 20.6 18.2V7" fill="none" stroke="#555" stroke-width="1.5"/><path d="M5.6 15.6L16.6 4.6L20 8L9 19Z" fill="#000"/><path d="M0.6 21L3.6 13.8L7.2 17.6Z" fill="#000"/><path d="M8.5 6.6L12.6 2.6Q14 1.4 15.2 2.6L16.4 3.6" fill="none" stroke="#000" stroke-width="1.4"/><circle cx="18.3" cy="2.9" r="2.3" fill="#000"/></svg><svg style="left:257.5px;top:892.2399999999999px" width="17" height="21" viewBox="0 0 17 21"><path d="M1.2 1.5L15.6 10.5L1.2 19.5Z" fill="none" stroke="#000" stroke-width="2.2" stroke-linejoin="miter"/></svg><div class="t " style="left:287.36px;top:892.00px;font-size:25.2px;color:#000;">Sitemap erstellen</div><div class="t " style="left:-2228.88px;width:3000px;text-align:right;top:892.00px;font-size:25.2px;color:#000;">1 Tag</div><div class="t " style="left:967.93px;top:892.00px;font-size:25.2px;color:#000;">Entwickler</div><div class="t " style="left:-2903.69px;width:3000px;text-align:right;top:937.00px;font-size:25.2px;color:#000;">13</div><svg style="left:110.2px;top:937.6099999999999px" width="22" height="22" viewBox="0 0 22 22"><path d="M10.2 0.8H2.8Q0.8 0.8 0.8 2.8V15" fill="none" stroke="#555" stroke-width="1.5"/><path d="M6.2 20.2H18.6Q20.6 20.2 20.6 18.2V7" fill="none" stroke="#555" stroke-width="1.5"/><path d="M5.6 15.6L16.6 4.6L20 8L9 19Z" fill="#000"/><path d="M0.6 21L3.6 13.8L7.2 17.6Z" fill="#000"/><path d="M8.5 6.6L12.6 2.6Q14 1.4 15.2 2.6L16.4 3.6" fill="none" stroke="#000" stroke-width="1.4"/><circle cx="18.3" cy="2.9" r="2.3" fill="#000"/></svg><svg style="left:233px;top:937.6099999999999px" width="17" height="21" viewBox="0 0 17 21"><path d="M1.2 1.5L15.6 10.5L1.2 19.5Z" fill="none" stroke="#000" stroke-width="2.2" stroke-linejoin="miter"/></svg><div class="t " style="left:263.09px;top:937.00px;font-size:25.2px;color:#000;">Vorbereitung abgeschlossen</div><div class="t " style="left:967.93px;top:937.00px;font-size:25.2px;color:#000;">Projektmanager</div><div class="t " style="left:-2904.66px;width:3000px;text-align:right;top:982.00px;font-size:25.2px;color:#000;font-weight:700;">14</div><svg style="left:231.4px;top:987.4799999999999px" width="20.3" height="15.4" viewBox="0 0 20.3 15.4"><path d="M0 0H20.3L10.15 15.4Z" fill="#000"/></svg><div class="t " style="left:261.51px;top:982.00px;font-size:25.2px;color:#000;font-weight:700;">Produktion</div><div class="t " style="left:968.31px;top:982.00px;font-size:25.2px;color:#000;font-weight:700;">Designer; Kunde; E…</div><div class="t " style="left:-2903.74px;width:3000px;text-align:right;top:1028.00px;font-size:25.2px;color:#000;">15</div><svg style="left:110.2px;top:1028.35px" width="22" height="22" viewBox="0 0 22 22"><path d="M10.2 0.8H2.8Q0.8 0.8 0.8 2.8V15" fill="none" stroke="#555" stroke-width="1.5"/><path d="M6.2 20.2H18.6Q20.6 20.2 20.6 18.2V7" fill="none" stroke="#555" stroke-width="1.5"/><path d="M5.6 15.6L16.6 4.6L20 8L9 19Z" fill="#000"/><path d="M0.6 21L3.6 13.8L7.2 17.6Z" fill="#000"/><path d="M8.5 6.6L12.6 2.6Q14 1.4 15.2 2.6L16.4 3.6" fill="none" stroke="#000" stroke-width="1.4"/><circle cx="18.3" cy="2.9" r="2.3" fill="#000"/></svg><svg style="left:257.5px;top:1028.35px" width="17" height="21" viewBox="0 0 17 21"><path d="M1.2 1.5L15.6 10.5L1.2 19.5Z" fill="none" stroke="#000" stroke-width="2.2" stroke-linejoin="miter"/></svg><div class="t " style="left:286.43px;top:1028.00px;font-size:25.2px;color:#000;">Layoutentwürfe</div><div class="t " style="left:-2229.38px;width:3000px;text-align:right;top:1028.00px;font-size:25.2px;color:#000;">2 Tage</div><div class="t " style="left:967.93px;top:1028.00px;font-size:25.2px;color:#000;">Designer</div><div class="t " style="left:-2903.69px;width:3000px;text-align:right;top:1073.00px;font-size:25.2px;color:#000;">16</div><svg style="left:110.2px;top:1073.7199999999998px" width="22" height="22" viewBox="0 0 22 22"><path d="M10.2 0.8H2.8Q0.8 0.8 0.8 2.8V15" fill="none" stroke="#555" stroke-width="1.5"/><path d="M6.2 20.2H18.6Q20.6 20.2 20.6 18.2V7" fill="none" stroke="#555" stroke-width="1.5"/><path d="M5.6 15.6L16.6 4.6L20 8L9 19Z" fill="#000"/><path d="M0.6 21L3.6 13.8L7.2 17.6Z" fill="#000"/><path d="M8.5 6.6L12.6 2.6Q14 1.4 15.2 2.6L16.4 3.6" fill="none" stroke="#000" stroke-width="1.4"/><circle cx="18.3" cy="2.9" r="2.3" fill="#000"/></svg><svg style="left:257.5px;top:1073.7199999999998px" width="17" height="21" viewBox="0 0 17 21"><path d="M1.2 1.5L15.6 10.5L1.2 19.5Z" fill="none" stroke="#000" stroke-width="2.2" stroke-linejoin="miter"/></svg><div class="t " style="left:286.43px;top:1073.00px;font-size:25.2px;color:#000;">Kundenprüfung und</div><div class="t " style="left:286.43px;top:1103.00px;font-size:25.2px;color:#000;">Designauswahl</div><div class="t " style="left:-2229.38px;width:3000px;text-align:right;top:1073.00px;font-size:25.2px;color:#000;">2 Tage</div><div class="t " style="left:967.93px;top:1073.00px;font-size:25.2px;color:#000;">Kunde; Designer</div><div class="t " style="left:-2903.53px;width:3000px;text-align:right;top:1148.00px;font-size:25.2px;color:#000;">17</div><svg style="left:110.2px;top:1149.1399999999999px" width="22" height="22" viewBox="0 0 22 22"><path d="M10.2 0.8H2.8Q0.8 0.8 0.8 2.8V15" fill="none" stroke="#555" stroke-width="1.5"/><path d="M6.2 20.2H18.6Q20.6 20.2 20.6 18.2V7" fill="none" stroke="#555" stroke-width="1.5"/><path d="M5.6 15.6L16.6 4.6L20 8L9 19Z" fill="#000"/><path d="M0.6 21L3.6 13.8L7.2 17.6Z" fill="#000"/><path d="M8.5 6.6L12.6 2.6Q14 1.4 15.2 2.6L16.4 3.6" fill="none" stroke="#000" stroke-width="1.4"/><circle cx="18.3" cy="2.9" r="2.3" fill="#000"/></svg><svg style="left:257.5px;top:1149.1399999999999px" width="17" height="21" viewBox="0 0 17 21"><path d="M1.2 1.5L15.6 10.5L1.2 19.5Z" fill="none" stroke="#000" stroke-width="2.2" stroke-linejoin="miter"/></svg><div class="t " style="left:287.36px;top:1148.00px;font-size:25.2px;color:#000;">Seitenerstellung</div><div class="t " style="left:-2229.38px;width:3000px;text-align:right;top:1148.00px;font-size:25.2px;color:#000;">5 Tage</div><div class="t " style="left:967.93px;top:1148.00px;font-size:25.2px;color:#000;">Entwickler</div><div class="t " style="left:-2903.70px;width:3000px;text-align:right;top:1194.00px;font-size:25.2px;color:#000;">18</div><svg style="left:110.2px;top:1194.5099999999998px" width="22" height="22" viewBox="0 0 22 22"><path d="M10.2 0.8H2.8Q0.8 0.8 0.8 2.8V15" fill="none" stroke="#555" stroke-width="1.5"/><path d="M6.2 20.2H18.6Q20.6 20.2 20.6 18.2V7" fill="none" stroke="#555" stroke-width="1.5"/><path d="M5.6 15.6L16.6 4.6L20 8L9 19Z" fill="#000"/><path d="M0.6 21L3.6 13.8L7.2 17.6Z" fill="#000"/><path d="M8.5 6.6L12.6 2.6Q14 1.4 15.2 2.6L16.4 3.6" fill="none" stroke="#000" stroke-width="1.4"/><circle cx="18.3" cy="2.9" r="2.3" fill="#000"/></svg><svg style="left:257.5px;top:1194.5099999999998px" width="17" height="21" viewBox="0 0 17 21"><path d="M1.2 1.5L15.6 10.5L1.2 19.5Z" fill="none" stroke="#000" stroke-width="2.2" stroke-linejoin="miter"/></svg><div class="t " style="left:286.43px;top:1194.00px;font-size:25.2px;color:#000;">Kundenprüfung</div><div class="t " style="left:-2229.38px;width:3000px;text-align:right;top:1194.00px;font-size:25.2px;color:#000;">3 Tage</div><div class="t " style="left:967.93px;top:1194.00px;font-size:25.2px;color:#000;">Kunde</div><div class="t " style="left:-2903.61px;width:3000px;text-align:right;top:1239.00px;font-size:25.2px;color:#000;">19</div><svg style="left:110.2px;top:1239.8799999999997px" width="22" height="22" viewBox="0 0 22 22"><path d="M10.2 0.8H2.8Q0.8 0.8 0.8 2.8V15" fill="none" stroke="#555" stroke-width="1.5"/><path d="M6.2 20.2H18.6Q20.6 20.2 20.6 18.2V7" fill="none" stroke="#555" stroke-width="1.5"/><path d="M5.6 15.6L16.6 4.6L20 8L9 19Z" fill="#000"/><path d="M0.6 21L3.6 13.8L7.2 17.6Z" fill="#000"/><path d="M8.5 6.6L12.6 2.6Q14 1.4 15.2 2.6L16.4 3.6" fill="none" stroke="#000" stroke-width="1.4"/><circle cx="18.3" cy="2.9" r="2.3" fill="#000"/></svg><svg style="left:257.5px;top:1239.8799999999997px" width="17" height="21" viewBox="0 0 17 21"><path d="M1.2 1.5L15.6 10.5L1.2 19.5Z" fill="none" stroke="#000" stroke-width="2.2" stroke-linejoin="miter"/></svg><div class="t " style="left:286.43px;top:1239.00px;font-size:25.2px;color:#000;">Produktion der finalen</div><div class="t " style="left:288.39px;top:1269.00px;font-size:25.2px;color:#000;">Webseite</div><div class="t " style="left:-2229.38px;width:3000px;text-align:right;top:1239.00px;font-size:25.2px;color:#000;">3 Tage</div><div class="t " style="left:967.93px;top:1239.00px;font-size:25.2px;color:#000;">Entwickler</div><div class="t " style="left:-2903.82px;width:3000px;text-align:right;top:1315.00px;font-size:25.2px;color:#000;">20</div><svg style="left:110.2px;top:1315.2999999999997px" width="22" height="22" viewBox="0 0 22 22"><path d="M10.2 0.8H2.8Q0.8 0.8 0.8 2.8V15" fill="none" stroke="#555" stroke-width="1.5"/><path d="M6.2 20.2H18.6Q20.6 20.2 20.6 18.2V7" fill="none" stroke="#555" stroke-width="1.5"/><path d="M5.6 15.6L16.6 4.6L20 8L9 19Z" fill="#000"/><path d="M0.6 21L3.6 13.8L7.2 17.6Z" fill="#000"/><path d="M8.5 6.6L12.6 2.6Q14 1.4 15.2 2.6L16.4 3.6" fill="none" stroke="#000" stroke-width="1.4"/><circle cx="18.3" cy="2.9" r="2.3" fill="#000"/></svg><svg style="left:257.5px;top:1315.2999999999997px" width="17" height="21" viewBox="0 0 17 21"><path d="M1.2 1.5L15.6 10.5L1.2 19.5Z" fill="none" stroke="#000" stroke-width="2.2" stroke-linejoin="miter"/></svg><div class="t " style="left:286.43px;top:1315.00px;font-size:25.2px;color:#000;">Betatest</div><div class="t " style="left:-2229.38px;width:3000px;text-align:right;top:1315.00px;font-size:25.2px;color:#000;">2 Tage</div><div class="t " style="left:967.93px;top:1315.00px;font-size:25.2px;color:#000;">Kunde</div><div class="t " style="left:-2903.57px;width:3000px;text-align:right;top:1360.00px;font-size:25.2px;color:#000;">21</div><svg style="left:110.2px;top:1360.6699999999996px" width="22" height="22" viewBox="0 0 22 22"><path d="M10.2 0.8H2.8Q0.8 0.8 0.8 2.8V15" fill="none" stroke="#555" stroke-width="1.5"/><path d="M6.2 20.2H18.6Q20.6 20.2 20.6 18.2V7" fill="none" stroke="#555" stroke-width="1.5"/><path d="M5.6 15.6L16.6 4.6L20 8L9 19Z" fill="#000"/><path d="M0.6 21L3.6 13.8L7.2 17.6Z" fill="#000"/><path d="M8.5 6.6L12.6 2.6Q14 1.4 15.2 2.6L16.4 3.6" fill="none" stroke="#000" stroke-width="1.4"/><circle cx="18.3" cy="2.9" r="2.3" fill="#000"/></svg><svg style="left:257.5px;top:1360.6699999999996px" width="17" height="21" viewBox="0 0 17 21"><path d="M1.2 1.5L15.6 10.5L1.2 19.5Z" fill="none" stroke="#000" stroke-width="2.2" stroke-linejoin="miter"/></svg><div class="t " style="left:286.56px;top:1360.00px;font-size:25.2px;color:#000;">Usability-Tests</div><div class="t " style="left:-2228.88px;width:3000px;text-align:right;top:1360.00px;font-size:25.2px;color:#000;">1 Tag</div><div class="t " style="left:967.93px;top:1360.00px;font-size:25.2px;color:#000;">Kunde</div><div class="t " style="left:-2903.53px;width:3000px;text-align:right;top:1405.00px;font-size:25.2px;color:#000;">22</div><svg style="left:110.2px;top:1406.0399999999995px" width="22" height="22" viewBox="0 0 22 22"><path d="M10.2 0.8H2.8Q0.8 0.8 0.8 2.8V15" fill="none" stroke="#555" stroke-width="1.5"/><path d="M6.2 20.2H18.6Q20.6 20.2 20.6 18.2V7" fill="none" stroke="#555" stroke-width="1.5"/><path d="M5.6 15.6L16.6 4.6L20 8L9 19Z" fill="#000"/><path d="M0.6 21L3.6 13.8L7.2 17.6Z" fill="#000"/><path d="M8.5 6.6L12.6 2.6Q14 1.4 15.2 2.6L16.4 3.6" fill="none" stroke="#000" stroke-width="1.4"/><circle cx="18.3" cy="2.9" r="2.3" fill="#000"/></svg><svg style="left:257.5px;top:1406.0399999999995px" width="17" height="21" viewBox="0 0 17 21"><path d="M1.2 1.5L15.6 10.5L1.2 19.5Z" fill="none" stroke="#000" stroke-width="2.2" stroke-linejoin="miter"/></svg><div class="t " style="left:287.36px;top:1405.00px;font-size:25.2px;color:#000;">Style Guide erstellen</div><div class="t " style="left:-2229.38px;width:3000px;text-align:right;top:1405.00px;font-size:25.2px;color:#000;">2 Tage</div><div class="t " style="left:967.93px;top:1405.00px;font-size:25.2px;color:#000;">Designer</div><div class="t " style="left:-2903.69px;width:3000px;text-align:right;top:1451.00px;font-size:25.2px;color:#000;">23</div><svg style="left:257.5px;top:1451.4099999999994px" width="17" height="21" viewBox="0 0 17 21"><path d="M1.2 1.5L15.6 10.5L1.2 19.5Z" fill="none" stroke="#000" stroke-width="2.2" stroke-linejoin="miter"/></svg><div class="t " style="left:286.43px;top:1451.00px;font-size:25.2px;color:#000;">Browser-Tests</div><div class="t " style="left:-2229.38px;width:3000px;text-align:right;top:1451.00px;font-size:25.2px;color:#000;">2 Tage</div><div class="t " style="left:967.93px;top:1451.00px;font-size:25.2px;color:#000;">Entwickler</div><div class="t " style="left:-2904.06px;width:3000px;text-align:right;top:1496.00px;font-size:25.2px;color:#000;">24</div><svg style="left:110.2px;top:1496.7799999999993px" width="22" height="22" viewBox="0 0 22 22"><path d="M10.2 0.8H2.8Q0.8 0.8 0.8 2.8V15" fill="none" stroke="#555" stroke-width="1.5"/><path d="M6.2 20.2H18.6Q20.6 20.2 20.6 18.2V7" fill="none" stroke="#555" stroke-width="1.5"/><path d="M5.6 15.6L16.6 4.6L20 8L9 19Z" fill="#000"/><path d="M0.6 21L3.6 13.8L7.2 17.6Z" fill="#000"/><path d="M8.5 6.6L12.6 2.6Q14 1.4 15.2 2.6L16.4 3.6" fill="none" stroke="#000" stroke-width="1.4"/><circle cx="18.3" cy="2.9" r="2.3" fill="#000"/></svg><svg style="left:257.5px;top:1496.7799999999993px" width="17" height="21" viewBox="0 0 17 21"><path d="M1.2 1.5L15.6 10.5L1.2 19.5Z" fill="none" stroke="#000" stroke-width="2.2" stroke-linejoin="miter"/></svg><div class="t " style="left:286.43px;top:1496.00px;font-size:25.2px;color:#000;">Bugs beheben</div><div class="t " style="left:-2229.38px;width:3000px;text-align:right;top:1496.00px;font-size:25.2px;color:#000;">3 Tage</div><div class="t " style="left:967.93px;top:1496.00px;font-size:25.2px;color:#000;">Entwickler</div><div class="t " style="left:-2903.74px;width:3000px;text-align:right;top:1541.00px;font-size:25.2px;color:#000;">25</div><svg style="left:110.2px;top:1542.1499999999992px" width="22" height="22" viewBox="0 0 22 22"><path d="M10.2 0.8H2.8Q0.8 0.8 0.8 2.8V15" fill="none" stroke="#555" stroke-width="1.5"/><path d="M6.2 20.2H18.6Q20.6 20.2 20.6 18.2V7" fill="none" stroke="#555" stroke-width="1.5"/><path d="M5.6 15.6L16.6 4.6L20 8L9 19Z" fill="#000"/><path d="M0.6 21L3.6 13.8L7.2 17.6Z" fill="#000"/><path d="M8.5 6.6L12.6 2.6Q14 1.4 15.2 2.6L16.4 3.6" fill="none" stroke="#000" stroke-width="1.4"/><circle cx="18.3" cy="2.9" r="2.3" fill="#000"/></svg><svg style="left:233px;top:1542.1499999999992px" width="17" height="21" viewBox="0 0 17 21"><path d="M1.2 1.5L15.6 10.5L1.2 19.5Z" fill="none" stroke="#000" stroke-width="2.2" stroke-linejoin="miter"/></svg><div class="t " style="left:261.13px;top:1541.00px;font-size:25.2px;color:#000;">Produktion abgeschlossen</div><div class="t " style="left:967.93px;top:1541.00px;font-size:25.2px;color:#000;">Projektmanager</div><div class="t " style="left:-2903.89px;width:3000px;text-align:right;top:1587.00px;font-size:25.2px;color:#000;font-weight:700;">26</div><svg style="left:231.4px;top:1592.019999999999px" width="20.3" height="15.4" viewBox="0 0 20.3 15.4"><path d="M0 0H20.3L10.15 15.4Z" fill="#000"/></svg><div class="t " style="left:261.51px;top:1587.00px;font-size:25.2px;color:#000;font-weight:700;">Post-Produktion</div><div class="t " style="left:968.31px;top:1587.00px;font-size:25.2px;color:#000;font-weight:700;">Produktmanager; Pr…</div><div class="t " style="left:-2903.53px;width:3000px;text-align:right;top:1632.00px;font-size:25.2px;color:#000;">27</div><svg style="left:110.2px;top:1632.889999999999px" width="22" height="22" viewBox="0 0 22 22"><path d="M10.2 0.8H2.8Q0.8 0.8 0.8 2.8V15" fill="none" stroke="#555" stroke-width="1.5"/><path d="M6.2 20.2H18.6Q20.6 20.2 20.6 18.2V7" fill="none" stroke="#555" stroke-width="1.5"/><path d="M5.6 15.6L16.6 4.6L20 8L9 19Z" fill="#000"/><path d="M0.6 21L3.6 13.8L7.2 17.6Z" fill="#000"/><path d="M8.5 6.6L12.6 2.6Q14 1.4 15.2 2.6L16.4 3.6" fill="none" stroke="#000" stroke-width="1.4"/><circle cx="18.3" cy="2.9" r="2.3" fill="#000"/></svg><svg style="left:257.5px;top:1632.889999999999px" width="17" height="21" viewBox="0 0 17 21"><path d="M1.2 1.5L15.6 10.5L1.2 19.5Z" fill="none" stroke="#000" stroke-width="2.2" stroke-linejoin="miter"/></svg><div class="t " style="left:288.39px;top:1632.00px;font-size:25.2px;color:#000;">Wartungsplan festlegen</div><div class="t " style="left:-2228.88px;width:3000px;text-align:right;top:1632.00px;font-size:25.2px;color:#000;">1 Tag</div><div class="t " style="left:967.93px;top:1632.00px;font-size:25.2px;color:#000;">Produktmanager</div><div class="t " style="left:-2903.70px;width:3000px;text-align:right;top:1678.00px;font-size:25.2px;color:#000;">28</div><svg style="left:110.2px;top:1678.2599999999989px" width="22" height="22" viewBox="0 0 22 22"><path d="M10.2 0.8H2.8Q0.8 0.8 0.8 2.8V15" fill="none" stroke="#555" stroke-width="1.5"/><path d="M6.2 20.2H18.6Q20.6 20.2 20.6 18.2V7" fill="none" stroke="#555" stroke-width="1.5"/><path d="M5.6 15.6L16.6 4.6L20 8L9 19Z" fill="#000"/><path d="M0.6 21L3.6 13.8L7.2 17.6Z" fill="#000"/><path d="M8.5 6.6L12.6 2.6Q14 1.4 15.2 2.6L16.4 3.6" fill="none" stroke="#000" stroke-width="1.4"/><circle cx="18.3" cy="2.9" r="2.3" fill="#000"/></svg><svg style="left:257.5px;top:1678.2599999999989px" width="17" height="21" viewBox="0 0 17 21"><path d="M1.2 1.5L15.6 10.5L1.2 19.5Z" fill="none" stroke="#000" stroke-width="2.2" stroke-linejoin="miter"/></svg><div class="t " style="left:286.43px;top:1678.00px;font-size:25.2px;color:#000;">Projektbeurteilung</div><div class="t " style="left:-2229.38px;width:3000px;text-align:right;top:1678.00px;font-size:25.2px;color:#000;">0,5 Tage</div><div class="t " style="left:967.93px;top:1678.00px;font-size:25.2px;color:#000;">Projektmanager</div><div class="t " style="left:-2903.61px;width:3000px;text-align:right;top:1723.00px;font-size:25.2px;color:#000;">29</div><svg style="left:110.2px;top:1723.6299999999987px" width="22" height="22" viewBox="0 0 22 22"><path d="M10.2 0.8H2.8Q0.8 0.8 0.8 2.8V15" fill="none" stroke="#555" stroke-width="1.5"/><path d="M6.2 20.2H18.6Q20.6 20.2 20.6 18.2V7" fill="none" stroke="#555" stroke-width="1.5"/><path d="M5.6 15.6L16.6 4.6L20 8L9 19Z" fill="#000"/><path d="M0.6 21L3.6 13.8L7.2 17.6Z" fill="#000"/><path d="M8.5 6.6L12.6 2.6Q14 1.4 15.2 2.6L16.4 3.6" fill="none" stroke="#000" stroke-width="1.4"/><circle cx="18.3" cy="2.9" r="2.3" fill="#000"/></svg><svg style="left:257.5px;top:1723.6299999999987px" width="17" height="21" viewBox="0 0 17 21"><path d="M1.2 1.5L15.6 10.5L1.2 19.5Z" fill="none" stroke="#000" stroke-width="2.2" stroke-linejoin="miter"/></svg><div class="t " style="left:286.43px;top:1723.00px;font-size:25.2px;color:#000;">Finale Präsentation</div><div class="t " style="left:-2229.38px;width:3000px;text-align:right;top:1723.00px;font-size:25.2px;color:#000;">0,5 Tage</div><div class="t " style="left:967.93px;top:1723.00px;font-size:25.2px;color:#000;">Kunde; Projektmana…</div><div class="a" style="left:0;top:0;width:2800px;height:1750px;clip-path:inset(245.35px 620.5px 18.700000000000045px 1257.4px round 0px);"><svg style="left:0;top:0" width="2800" height="1750"><path d="M1622.3 256.6H2200V268.5H1639.3L1628.6 278.5L1619.8 267.5Q1617.8 265.5 1618.3 260.6Q1618.8 256.6 1622.3 256.6Z" fill="#1190fb" stroke="#0a7fe6" stroke-width="1"/></svg><svg style="left:0;top:0" width="2800" height="1750"><path d="M1622.3 301.5H2200V314.8H1639.3L1628.6 324.3L1619.8 313.8Q1617.8 311.8 1618.3 305.5Q1618.8 301.5 1622.3 301.5Z" fill="#1190fb" stroke="#0a7fe6" stroke-width="1"/><rect x="2161.6" y="302.0" width="38.40000000000009" height="12.300000000000011" fill="#cfe1f8" stroke="#0a7fe6" stroke-width="1"/></svg><svg style="left:0;top:0" width="2800" height="1750"><path d="M1628.3 357.99999999999994L1643.6 373.29999999999995L1628.3 388.59999999999997L1613.0 373.29999999999995Z" fill="#1190fb"/></svg><svg style="left:0;top:0" width="2800" height="1750"><rect x="1628.8" y="434.52" width="26.700000000000045" height="29.4" rx="5.5" fill="#1190fb" stroke="#0a7fe6" stroke-width="1"/><rect x="1655.5" y="494.915" width="27.90000000000009" height="29.4" rx="5.5" fill="#1190fb" stroke="#0a7fe6" stroke-width="1"/><rect x="1683.5" y="540.2849999999999" width="54" height="29.4" rx="5.5" fill="#1190fb" stroke="#0a7fe6" stroke-width="1"/><rect x="1737.5" y="585.6549999999999" width="28" height="29.4" rx="5.5" fill="#1190fb" stroke="#0a7fe6" stroke-width="1"/><rect x="1765.5" y="631.0249999999999" width="108.70000000000005" height="29.4" rx="5.5" fill="#1190fb" stroke="#0a7fe6" stroke-width="1"/><rect x="1874.5" y="676.3949999999999" width="163.5999999999999" height="29.4" rx="5.5" fill="#1190fb" stroke="#0a7fe6" stroke-width="1"/><rect x="2039.1" y="721.7649999999999" width="54.20000000000027" height="29.4" rx="5.5" fill="#1190fb" stroke="#0a7fe6" stroke-width="1"/><rect x="2094.3" y="767.1349999999999" width="165.19999999999982" height="29.4" rx="5.5" fill="#1190fb" stroke="#0a7fe6" stroke-width="1"/><rect x="2148.4" y="767.1349999999999" width="40" height="29.4" fill="#cfe1f8" stroke="#0a7fe6" stroke-width="1"/><path d="M1643.6 373.29999999999995H1659.2Q1663.2 373.29999999999995 1663.2 377.29999999999995V407.51Q1663.2 411.51 1659.2 411.51H1607.4Q1603.4 411.51 1603.4 415.51V445.21999999999997Q1603.4 449.21999999999997 1607.4 449.21999999999997H1620.3" fill="none" stroke="#000" stroke-width="1.5"/><path d="M1628.3 449.21999999999997L1619.3 444.71999999999997V453.71999999999997Z" fill="#000"/><path d="M1656 449.21999999999997H1671.4Q1675.4 449.21999999999997 1675.4 453.21999999999997V482.93Q1675.4 486.93 1671.4 486.93H1634.4Q1630.4 486.93 1630.4 490.93V505.615Q1630.4 509.615 1634.4 509.615H1647" fill="none" stroke="#000" stroke-width="1.5"/><path d="M1655 509.615L1646 505.115V514.115Z" fill="#000"/><path d="M1683.9 509.615H1699.2Q1703.2 509.615 1703.2 513.615V531.7849999999999" fill="none" stroke="#000" stroke-width="1.5"/><path d="M1703.2 539.7849999999999L1698.7 530.7849999999999H1707.7Z" fill="#000"/><path d="M1738 554.9849999999999H1753.4Q1757.4 554.9849999999999 1757.4 558.9849999999999V573.67Q1757.4 577.67 1753.4 577.67H1716.3Q1712.3 577.67 1712.3 581.67V596.3549999999999Q1712.3 600.3549999999999 1716.3 600.3549999999999H1729" fill="none" stroke="#000" stroke-width="1.5"/><path d="M1737 600.3549999999999L1728 595.8549999999999V604.8549999999999Z" fill="#000"/><path d="M1766 600.3549999999999H1781.4Q1785.4 600.3549999999999 1785.4 604.3549999999999V622.5249999999999" fill="none" stroke="#000" stroke-width="1.5"/><path d="M1785.4 630.5249999999999L1780.9 621.5249999999999H1789.9Z" fill="#000"/><path d="M1874.7 645.7249999999999H1890.9Q1894.9 645.7249999999999 1894.9 649.7249999999999V667.8949999999999" fill="none" stroke="#000" stroke-width="1.5"/><path d="M1894.9 675.8949999999999L1890.4 666.8949999999999H1899.4Z" fill="#000"/><path d="M2038.6 691.0949999999999H2055.2Q2059.2 691.0949999999999 2059.2 695.0949999999999V713.2649999999999" fill="none" stroke="#000" stroke-width="1.5"/><path d="M2059.2 721.2649999999999L2054.7 712.2649999999999H2063.7Z" fill="#000"/><path d="M2093.8 736.4649999999999H2109.2Q2113.2 736.4649999999999 2113.2 740.4649999999999V758.6349999999999" fill="none" stroke="#000" stroke-width="1.5"/><path d="M2113.2 766.6349999999999L2108.7 757.6349999999999H2117.7Z" fill="#000"/></svg><div class="a" style="left:2177.00px;top:807.60px;width:2.50px;height:31.80px;background:#222;"></div><div class="t " style="left:-1396.64px;width:3000px;text-align:right;top:260.00px;font-size:21.5px;color:#000;">Kundenwebseite</div><div class="t " style="left:-1396.21px;width:3000px;text-align:right;top:305.00px;font-size:21.5px;color:#000;">Vorbereitung</div><div class="t " style="left:-1401.20px;width:3000px;text-align:right;top:365.00px;font-size:21.5px;color:#000;">Start Kunden-Arbeitsbereich</div><div class="t " style="left:-1411.04px;width:3000px;text-align:right;top:441.00px;font-size:21.5px;color:#000;">Kunden-Fragebogen und Ziele</div><div class="t " style="left:-1383.60px;width:3000px;text-align:right;top:501.00px;font-size:21.5px;color:#000;">Nutzungsszenarien</div><div class="t " style="left:-1331.44px;width:3000px;text-align:right;top:548.00px;font-size:21.5px;color:#000;">Vergleichsanalyse</div><div class="t " style="left:-1301.10px;width:3000px;text-align:right;top:594.00px;font-size:21.5px;color:#000;">Technische Spezifikationen</div><div class="t " style="left:-1249.41px;width:3000px;text-align:right;top:638.00px;font-size:21.5px;color:#000;">Angebotserstellung</div><div class="t " style="left:-1140.60px;width:3000px;text-align:right;top:684.00px;font-size:21.5px;color:#000;">Zeitplan erstellen</div><div class="t " style="left:-975.60px;width:3000px;text-align:right;top:729.00px;font-size:21.5px;color:#000;">Aufgabenliste erstellen</div><div class="t " style="left:-921.10px;width:3000px;text-align:right;top:774.00px;font-size:21.5px;color:#000;">Inhaltstabelle erstellen</div><div class="t " style="left:-835.70px;width:3000px;text-align:right;top:834.00px;font-size:21.5px;color:#000;">Kommunikationswege definieren</div><div class="t " style="left:1676.24px;top:365.00px;font-size:21.5px;color:#000;">Kunde; Projektmanager; Designer; Entwickler</div><div class="t " style="left:1688.74px;top:441.00px;font-size:21.5px;color:#000;">Kunde; Projektmanager</div><div class="t " style="left:1717.24px;top:501.00px;font-size:21.5px;color:#000;">Kunde; Produktmanager</div><div class="t " style="left:1770.74px;top:548.00px;font-size:21.5px;color:#000;">Produktmanager</div><div class="t " style="left:1799.14px;top:594.00px;font-size:21.5px;color:#000;">Entwickler; Produktmanager</div><div class="t " style="left:1908.74px;top:638.00px;font-size:21.5px;color:#000;">Projektmanager</div><div class="t " style="left:2073.04px;top:684.00px;font-size:21.5px;color:#000;">Projektmanager</div><div class="t " style="left:2127.24px;top:729.00px;font-size:21.5px;color:#000;">Projektmanager</div><div class="t " style="left:2050.02px;top:896.00px;font-size:21.5px;color:#000;">Sitemap erstellen</div><div class="t " style="left:1961.81px;top:941.00px;font-size:21.5px;color:#000;">Vorbereitung abgeschlossen</div><div class="t " style="left:2148.64px;top:1091.00px;font-size:21.5px;color:#000;">Kundenprüfung und Designauswahl</div><svg style="left:2123.6px;top:985.16px" width="30" height="17" viewBox="0 0 30 17"><path d="M1 1L14.5 8.5L1 16M14 1L27.5 8.5L14 16" fill="none" stroke="#1a5fe3" stroke-width="2.5"/></svg><svg style="left:2123.6px;top:1030.53px" width="30" height="17" viewBox="0 0 30 17"><path d="M1 1L14.5 8.5L1 16M14 1L27.5 8.5L14 16" fill="none" stroke="#1a5fe3" stroke-width="2.5"/></svg><svg style="left:2123.6px;top:1151.32px" width="30" height="17" viewBox="0 0 30 17"><path d="M1 1L14.5 8.5L1 16M14 1L27.5 8.5L14 16" fill="none" stroke="#1a5fe3" stroke-width="2.5"/></svg><svg style="left:2123.6px;top:1196.69px" width="30" height="17" viewBox="0 0 30 17"><path d="M1 1L14.5 8.5L1 16M14 1L27.5 8.5L14 16" fill="none" stroke="#1a5fe3" stroke-width="2.5"/></svg><svg style="left:2123.6px;top:1257.09px" width="30" height="17" viewBox="0 0 30 17"><path d="M1 1L14.5 8.5L1 16M14 1L27.5 8.5L14 16" fill="none" stroke="#1a5fe3" stroke-width="2.5"/></svg><svg style="left:2123.6px;top:1317.48px" width="30" height="17" viewBox="0 0 30 17"><path d="M1 1L14.5 8.5L1 16M14 1L27.5 8.5L14 16" fill="none" stroke="#1a5fe3" stroke-width="2.5"/></svg><svg style="left:2123.6px;top:1362.85px" width="30" height="17" viewBox="0 0 30 17"><path d="M1 1L14.5 8.5L1 16M14 1L27.5 8.5L14 16" fill="none" stroke="#1a5fe3" stroke-width="2.5"/></svg><svg style="left:2123.6px;top:1408.22px" width="30" height="17" viewBox="0 0 30 17"><path d="M1 1L14.5 8.5L1 16M14 1L27.5 8.5L14 16" fill="none" stroke="#1a5fe3" stroke-width="2.5"/></svg><svg style="left:2123.6px;top:1453.59px" width="30" height="17" viewBox="0 0 30 17"><path d="M1 1L14.5 8.5L1 16M14 1L27.5 8.5L14 16" fill="none" stroke="#1a5fe3" stroke-width="2.5"/></svg><svg style="left:2123.6px;top:1498.96px" width="30" height="17" viewBox="0 0 30 17"><path d="M1 1L14.5 8.5L1 16M14 1L27.5 8.5L14 16" fill="none" stroke="#1a5fe3" stroke-width="2.5"/></svg><svg style="left:2123.6px;top:1544.33px" width="30" height="17" viewBox="0 0 30 17"><path d="M1 1L14.5 8.5L1 16M14 1L27.5 8.5L14 16" fill="none" stroke="#1a5fe3" stroke-width="2.5"/></svg><svg style="left:2123.6px;top:1589.70px" width="30" height="17" viewBox="0 0 30 17"><path d="M1 1L14.5 8.5L1 16M14 1L27.5 8.5L14 16" fill="none" stroke="#1a5fe3" stroke-width="2.5"/></svg><svg style="left:2123.6px;top:1635.07px" width="30" height="17" viewBox="0 0 30 17"><path d="M1 1L14.5 8.5L1 16M14 1L27.5 8.5L14 16" fill="none" stroke="#1a5fe3" stroke-width="2.5"/></svg><svg style="left:2123.6px;top:1680.44px" width="30" height="17" viewBox="0 0 30 17"><path d="M1 1L14.5 8.5L1 16M14 1L27.5 8.5L14 16" fill="none" stroke="#1a5fe3" stroke-width="2.5"/></svg><svg style="left:2123.6px;top:1725.81px" width="30" height="17" viewBox="0 0 30 17"><path d="M1 1L14.5 8.5L1 16M14 1L27.5 8.5L14 16" fill="none" stroke="#1a5fe3" stroke-width="2.5"/></svg></div></div><div class="t sf" style="left:2392.90px;top:128.00px;font-size:23.4px;color:#a39c9f;">Vorgang:</div><div class="t sf" style="left:2495.75px;top:128.00px;font-size:23.4px;color:#efebed;">Anmerkungen</div><div class="a" style="left:2203.70px;top:171.20px;width:573.20px;height:71.20px;background:#635c5f;border-radius:7px;overflow:hidden;"></div><div class="a" style="left:2688.00px;top:171.20px;width:88.90px;height:71.20px;background:#8f898b;border-radius:0 7px 7px 0;"></div><svg style="left:2235px;top:187px" width="34" height="40" viewBox="0 0 34 40"><rect x="0.2" y="7.2" width="31.8" height="32" rx="1.6" fill="#aca7a9"/><rect x="4.2" y="11.2" width="24" height="24" fill="#e8e4e6"/><rect x="8" y="6" width="16" height="6" rx="1" fill="#e8e4e6"/><path d="M8 9H24V12H8Z" fill="#625b5e" opacity="0.0"/><circle cx="16" cy="4.8" r="4.2" fill="#e8e4e6"/><circle cx="16" cy="4.8" r="1.6" fill="#8a8487"/><path d="M6.8 24.8L13.8 31.2L26 17" fill="none" stroke="#625b5e" stroke-width="4.6"/></svg><svg style="left:2329px;top:189px" width="38" height="38" viewBox="0 0 38 38"><g fill="none" stroke="#e8e4e6" stroke-width="3.6" stroke-linecap="butt"><path d="M14.5 10L20 4.5A6.3 6.3 0 0 1 29 13.5L23.5 19"/><path d="M23 28L17.5 33.5A6.3 6.3 0 0 1 8.5 24.5L14 19"/></g><path d="M13.5 24.5L24 14" stroke="#b3aeb0" stroke-width="4.8" stroke-linecap="round"/></svg><svg style="left:2426px;top:189px" width="42" height="40" viewBox="0 0 42 40"><g fill="#e8e4e6"><rect x="5" y="0" width="20" height="4.4" rx="2.2"/><rect x="2" y="8" width="20" height="4.4" rx="2.2"/><rect x="6" y="16" width="16" height="4.4" rx="2.2"/><rect x="2" y="23.5" width="14" height="4.4" rx="2.2"/><rect x="0" y="31" width="17" height="4.4" rx="2.2"/><circle cx="28.5" cy="27.5" r="11.2"/></g><text x="28.5" y="34.6" font-family="Liberation Sans" font-weight="700" font-size="19" text-anchor="middle" fill="#625b5e">$</text></svg><svg style="left:2524px;top:185px" width="40" height="44" viewBox="0 0 40 44"><path d="M19.4 7.4A16.2 16.2 0 1 0 32.5 14" fill="none" stroke="#e8e4e6" stroke-width="4.4"/><path d="M19.4 1L28 6.8L19.4 13Z" fill="#e8e4e6"/><circle cx="16" cy="20" r="2.4" fill="none" stroke="#e8e4e6" stroke-width="1.8"/><circle cx="23.5" cy="27.6" r="2.4" fill="none" stroke="#e8e4e6" stroke-width="1.8"/><path d="M27 17.8L16 30.5" stroke="#e8e4e6" stroke-width="1.9"/></svg><svg style="left:2621px;top:189px" width="37" height="37" viewBox="0 0 37 37"><g fill="#e8e4e6"><path d="M4 0.8H24.2V8.9H4A4 4 0 0 1 4 0.8Z"/><path d="M28 0.8H32.2A4 4 0 0 1 32.2 8.9H28Z"/><path d="M4 15H24.2V23.1H4A4 4 0 0 1 4 15Z"/><path d="M28 15H32.2A4 4 0 0 1 32.2 23.1H28Z"/><path d="M4 28.8H24.2V36.9H4A4 4 0 0 1 4 28.8Z"/><path d="M28 28.8H32.2A4 4 0 0 1 32.2 36.9H28Z"/></g></svg><svg style="left:2718px;top:189px" width="37" height="38" viewBox="0 0 37 38"><rect x="0.2" y="0.8" width="36" height="36.2" rx="2.5" fill="#e8e4e6"/><path d="M4 33L6.5 26.5L24 9L29 14L11.5 31.5Z" fill="#8f898b"/><path d="M25.5 7.5L28 5A2.2 2.2 0 0 1 31 5L32.2 6.2A2.2 2.2 0 0 1 32.2 9.2L30.5 11Z" fill="#8f898b"/></svg><div class="a" style="left:2203.70px;top:264.30px;width:575.00px;height:43.50px;background:#635c5f;border-radius:7px;overflow:hidden;"></div><div class="a" style="left:2203.70px;top:264.30px;width:287.30px;height:43.50px;background:#8f8a8c;border-radius:7px 0 0 7px;"></div><div class="t sf" style="left:847.30px;width:3000px;text-align:center;top:275.00px;font-size:23.4px;color:#e9e5e7;">Kommentare</div><div class="t sf" style="left:1135.70px;width:3000px;text-align:center;top:275.00px;font-size:23.4px;color:#e9e5e7;">Notizen</div><div class="a" style="left:2203.50px;top:333.30px;width:575.40px;height:213.20px;background:#625b5e;border-radius:9px;"></div><div class="a" style="left:2203.50px;top:563.00px;width:575.40px;height:161.40px;background:#625b5e;border-radius:9px;"></div><div class="a" style="left:2203.50px;top:741.00px;width:575.40px;height:187.00px;background:#625b5e;border-radius:9px;"></div><div class="a" style="left:2203.50px;top:944.80px;width:575.40px;height:135.90px;background:#625b5e;border-radius:9px;"></div><svg style="left:2219px;top:348.9px" width="64" height="66.3" viewBox="0 0 64 66.3"><defs><clipPath id="c348"><rect x="0" y="0" width="64" height="66.3" rx="7"/></clipPath></defs><g clip-path="url(#c348)"><rect width="64" height="67" fill="#e9e6df"/><rect x="0" y="0" width="14" height="40" fill="#6b4a3a"/><rect x="0" y="28" width="12" height="40" fill="#8c9a5a"/><path d="M50 30L58 15M52 38L63 22M46 45L56 40" stroke="#8eae4e" stroke-width="3"/><rect x="44" y="44" width="22" height="24" fill="#8eae50"/><path d="M12 66C12 50 14 34 18 24C22 14 30 11 35 11C43 11 49 17 51 28C54 40 55 55 58 66Z" fill="#4a2820"/><ellipse cx="33" cy="33" rx="10.5" ry="14" fill="#e4bfa9"/><path d="M27 40Q33 44 39 40" stroke="#b06060" stroke-width="2" fill="none"/><path d="M2 66L6 56Q14 52 20 58L22 66Z" fill="#dc5aa0"/><path d="M26 66L28 52Q34 58 40 52L44 66Z" fill="#d9499a"/></g></svg><svg style="left:2219px;top:578.9px" width="64" height="66.3" viewBox="0 0 64 66.3"><defs><clipPath id="c578"><rect x="0" y="0" width="64" height="66.3" rx="7"/></clipPath></defs><g clip-path="url(#c578)"><rect width="64" height="67" fill="#e7e7e7"/><path d="M16 22Q16 8 32 7Q46 7 47 20L46 30L44 22Q36 16 22 18L19 30Z" fill="#5a4636"/><path d="M19 22Q19 14 32 14Q44 14 45 24L44 40Q42 52 32 53Q23 52 20 42Z" fill="#dcb49b"/><path d="M22 28H28M36 27H42" stroke="#4a3a30" stroke-width="2.2"/><path d="M6 66L12 55Q22 48 28 47L34 60L44 46Q56 48 64 54V67Z" fill="#3b78a0"/><path d="M28 47L36 66H44L40 52Z" fill="#222"/></g></svg><svg style="left:2219px;top:756.7px" width="64" height="66.3" viewBox="0 0 64 66.3"><defs><clipPath id="c756"><rect x="0" y="0" width="64" height="66.3" rx="7"/></clipPath></defs><g clip-path="url(#c756)"><rect width="64" height="67" fill="#efefef"/><path d="M4 66Q6 40 14 24Q22 13 35 13Q47 15 52 30Q56 48 55 66Z" fill="#1b1716"/><ellipse cx="33" cy="40" rx="15" ry="21" fill="#b3703f"/><path d="M18 37H30M36 37H48" stroke="#3b2a20" stroke-width="2.4"/><rect x="19" y="33" width="11" height="8" rx="2" fill="none" stroke="#3b2a20" stroke-width="1.6"/><rect x="36" y="33" width="11" height="8" rx="2" fill="none" stroke="#3b2a20" stroke-width="1.6"/><path d="M26 50Q33 56 41 50Q34 53 26 50Z" fill="#fff"/><path d="M25 49Q33 58 42 49" stroke="#f4f0ec" stroke-width="3" fill="none"/><path d="M46 54L64 60V67H50Z" fill="#9c9898"/></g></svg><svg style="left:2219px;top:960.6px" width="64" height="66.3" viewBox="0 0 64 66.3"><defs><clipPath id="c960"><rect x="0" y="0" width="64" height="66.3" rx="7"/></clipPath></defs><g clip-path="url(#c960)"><rect width="64" height="67" fill="#e3dbcd"/><rect x="0" y="0" width="30" height="67" fill="#ece7df"/><rect x="33" y="0" width="4" height="30" fill="#d6cdbd"/><path d="M6 64Q6 44 14 32Q18 18 32 17Q46 17 50 30Q56 44 58 64Z" fill="#6a4634"/><ellipse cx="30" cy="37" rx="11" ry="15" fill="#e2bea5"/><path d="M24 45Q30 49 36 45" stroke="#fff" stroke-width="2" fill="none"/><path d="M22 66L26 57H38L42 66Z" fill="#ddd6c8"/></g></svg><div class="t " style="left:2298.37px;top:354.00px;font-size:27.3px;color:#e9e5e7;font-weight:700;">Produktmanager</div><div class="t sf" style="left:2298.92px;top:388.00px;font-size:25.4px;color:#e9e5e7;">22.09.20, 01:30</div><div class="t sf" style="left:2217.57px;top:429.00px;font-size:23.5px;color:#e9e5e7;">Der Kunde hat das mit den Nutzungsszenarien</div><div class="t sf" style="left:2217.94px;top:455.00px;font-size:23.5px;color:#e9e5e7;">nicht richtig verstanden und möchte jetzt im</div><div class="t sf" style="left:2218.55px;top:481.00px;font-size:23.5px;color:#e9e5e7;">zweiten Anlauf ein besseres Dokument liefern.</div><div class="t sf" style="left:2217.57px;top:507.00px;font-size:23.5px;color:#e9e5e7;">Dafür braucht er aber sicher noch zwei Tage.</div><div class="t " style="left:2298.37px;top:584.00px;font-size:27.3px;color:#e9e5e7;font-weight:700;">Entwickler</div><div class="t sf" style="left:2298.92px;top:618.00px;font-size:25.4px;color:#e9e5e7;">22.09.20, 01:42</div><div class="t sf" style="left:2217.57px;top:660.00px;font-size:23.5px;color:#e9e5e7;">Das habe ich mir schon gedacht <svg style="position:relative;display:inline-block;vertical-align:-5px;margin:0 3px;overflow:visible" width="25" height="25" viewBox="0 0 25 25"><defs><linearGradient id="emo" x1="0" y1="0" x2="0" y2="1"><stop offset="0" stop-color="#fde05a"/><stop offset="1" stop-color="#f2a02a"/></linearGradient></defs><circle cx="12.5" cy="12.5" r="12.2" fill="url(#emo)"/><ellipse cx="8" cy="10" rx="1.6" ry="2.3" fill="#5a3a1a"/><path d="M14.5 10.5Q17 8.5 19.5 10.5" stroke="#5a3a1a" stroke-width="1.6" fill="none"/><path d="M7.5 16Q12.5 20.5 18 15" stroke="#5a3a1a" stroke-width="1.7" fill="none"/></svg>. Der erste</div><div class="t sf" style="left:2219.40px;top:686.00px;font-size:23.5px;color:#e9e5e7;">Versuch war nicht sehr zielführend.</div><div class="t " style="left:2298.37px;top:765.00px;font-size:27.3px;color:#e9e5e7;font-weight:700;">Designer</div><div class="t sf" style="left:2298.92px;top:799.00px;font-size:25.4px;color:#e9e5e7;">22.09.20, 02:06</div><div class="t sf" style="left:2217.57px;top:841.00px;font-size:23.5px;color:#e9e5e7;">Hey <b>Projektmanager</b>, kannst du dem Kunden nicht</div><div class="t sf" style="left:2218.51px;top:866.00px;font-size:23.5px;color:#e9e5e7;">das Dokument vom letzten Mal senden? Das war</div><div class="t sf" style="left:2218.85px;top:892.00px;font-size:23.5px;color:#e9e5e7;">super ausgearbeitet!</div><div class="t " style="left:2298.37px;top:968.00px;font-size:27.3px;color:#e9e5e7;font-weight:700;">Projektmanager</div><div class="t sf" style="left:2298.92px;top:1002.00px;font-size:25.4px;color:#e9e5e7;">22.09.20, 02:48</div><div class="t sf" style="left:2217.57px;top:1043.00px;font-size:23.5px;color:#e9e5e7;">Nein <b>Designer</b>, das ist leider unter NDA!</div><div class="a" style="left:2203.20px;top:1671.20px;width:473.80px;height:59.60px;background:#655e61;border-radius:8px;"></div><div class="t sf" style="left:940.60px;width:3000px;text-align:center;top:1692.00px;font-size:23.4px;color:#e9e5e7;">Neuer Kommentar</div><div class="a" style="left:2693.00px;top:1671.20px;width:85.50px;height:59.60px;background:#655e61;border-radius:8px;"></div><svg style="left:2713px;top:1687px" width="48" height="28" viewBox="0 0 48 28"><circle cx="14" cy="14" r="12.8" fill="none" stroke="#e8e4e6" stroke-width="1.8"/><circle cx="8.5" cy="14" r="1.9" fill="#e8e4e6"/><circle cx="14" cy="14" r="1.9" fill="#e8e4e6"/><circle cx="19.5" cy="14" r="1.9" fill="#e8e4e6"/><path d="M33.2 10.2L39.3 16.6L45.3 10.2" fill="none" stroke="#e8e4e6" stroke-width="1.9"/></svg><div class="a" style="left:839px;top:1059.3px;width:1086.3px;height:549.7px;border-radius:7px;background:#fff;box-shadow:0 0 0 1px rgba(0,0,0,0.12),0 8px 34px rgba(0,0,0,0.2);"></div><div class="a" style="left:0;top:0;width:2800px;height:1750px;clip-path:inset(1059.3px 874.7px 141px 839px round 7px);"><div class="a" style="left:839.00px;top:1059.30px;width:1086.30px;height:37.70px;background:#f6eff1;"></div><div class="a" style="left:839.00px;top:1097.00px;width:1086.30px;height:129.80px;background:#f0eaec;"></div><div class="a" style="left:839.00px;top:1165.00px;width:1086.30px;height:1.20px;background:#d6d0d3;"></div><div class="a" style="left:839.00px;top:1097.80px;width:24.00px;height:1.20px;background:#bcbcbc;"></div><div class="a" style="left:839.00px;top:1226.80px;width:1086.30px;height:42.70px;background:#efe9eb;"></div><div class="a" style="left:839.00px;top:1226.30px;width:1086.30px;height:1.20px;background:#c9c4c6;"></div><div class="a" style="left:839.00px;top:1268.90px;width:1086.30px;height:1.20px;background:#bdb8ba;"></div><div class="a" style="left:897.40px;top:1227.00px;width:1.20px;height:42.50px;background:#c9c4c6;"></div><div class="a" style="left:1190.00px;top:1227.00px;width:1.20px;height:42.50px;background:#c9c4c6;"></div><div class="a" style="left:1449.90px;top:1227.00px;width:1.20px;height:42.50px;background:#c9c4c6;"></div><div class="a" style="left:848.8px;top:1067.6px;width:18.4px;height:18.4px;border-radius:50%;background:#fe5f57;box-shadow:inset 0 0 0 0.6px #e14640;"></div><div class="a" style="left:878.8px;top:1067.6px;width:18.4px;height:18.4px;border-radius:50%;background:#febc2e;box-shadow:inset 0 0 0 0.6px #dfa023;"></div><div class="a" style="left:908.8px;top:1067.6px;width:18.4px;height:18.4px;border-radius:50%;background:#28c840;box-shadow:inset 0 0 0 0.6px #1aab29;"></div><div class="t sd" style="left:-118.00px;width:3000px;text-align:center;top:1063.00px;font-size:24.3px;color:#3d3739;">Notifikationen</div><div class="a" style="left:1068.60px;top:1113.20px;width:627.30px;height:35.40px;background:#e4dee0;border-radius:8px;"></div><div class="a" style="left:1070.00px;top:1114.80px;width:151.90px;height:32.70px;background:#fff;border-radius:7px;box-shadow:0 0.5px 1.5px rgba(0,0,0,0.25);"></div><div class="t sd" style="left:1076.87px;top:1118.00px;font-size:23.5px;color:#262224;">Kommentare</div><div class="t sd" style="left:1232.67px;top:1118.00px;font-size:23.5px;color:#262224;">Planung</div><div class="a" style="left:1330.00px;top:1120.60px;width:1.50px;height:19.50px;background:#cfc9cc;"></div><div class="t sd" style="left:1339.83px;top:1118.00px;font-size:23.5px;color:#262224;">Import</div><div class="a" style="left:1422.50px;top:1120.60px;width:1.50px;height:19.50px;background:#cfc9cc;"></div><div class="t sd" style="left:1432.57px;top:1118.00px;font-size:23.5px;color:#262224;">Export</div><div class="a" style="left:1514.50px;top:1120.60px;width:1.50px;height:19.50px;background:#cfc9cc;"></div><div class="t sd" style="left:1526.50px;top:1118.00px;font-size:23.5px;color:#262224;">Veröffentlichen</div><div class="a" style="left:859.70px;top:1185.70px;width:23.00px;height:22.30px;background:#fff;border-radius:5px;box-shadow:inset 0 0 0 1px #c9c3c6;"></div><div class="t sd" style="left:890.07px;top:1186.00px;font-size:23.5px;color:#262224;">Dieses Fenster öffnen, wenn neue Kommentare auftreten</div><svg style="left:1882px;top:1184px" width="23" height="26" viewBox="0 0 23 26"><path d="M16.5 7.5A9 9 0 1 0 20 14.5" fill="none" stroke="#bdb7ba" stroke-width="1.8"/><path d="M12 1.5L17 7.2L11.5 10.5" fill="none" stroke="#bdb7ba" stroke-width="1.8"/></svg><div class="t sd" style="left:909.39px;top:1238.00px;font-size:23.5px;color:#262224;">Quelle</div><div class="t sd" style="left:1202.65px;top:1238.00px;font-size:23.5px;color:#262224;">Autor</div><div class="t sd" style="left:1461.07px;top:1238.00px;font-size:23.5px;color:#262224;">Kommentar</div><div class="a" style="left:858.7px;top:1306.5px;width:18px;height:18px;border-radius:50%;background:#1a7bf0;"></div><div class="a" style="left:858.7px;top:1370.5px;width:18px;height:18px;border-radius:50%;background:#1a7bf0;"></div><div class="t sd" style="left:907.57px;top:1306.00px;font-size:23.5px;color:#262224;">Nutzungsszenarien</div><div class="t sd" style="left:1200.77px;top:1306.00px;font-size:23.5px;color:#262224;">Designer</div><div class="t sd" style="left:1459.87px;top:1280.00px;font-size:23.5px;color:#262224;">Hey Projektmanager, kannst du dem</div><div class="t sd" style="left:1459.87px;top:1306.00px;font-size:23.5px;color:#262224;">Kunden nicht das Dokument vom letzten</div><div class="t sd" style="left:1459.87px;top:1332.00px;font-size:23.5px;color:#262224;">Mal senden? Das war super ausgearbeitet!</div><div class="t sd" style="left:907.57px;top:1370.00px;font-size:23.5px;color:#262224;">Nutzungsszenarien</div><div class="t sd" style="left:1200.77px;top:1370.00px;font-size:23.5px;color:#262224;">Projektmanager</div><div class="t sd" style="left:1459.87px;top:1370.00px;font-size:23.5px;color:#262224;">Nein Designer, das ist leider unter NDA!</div></div></div></body></html>
